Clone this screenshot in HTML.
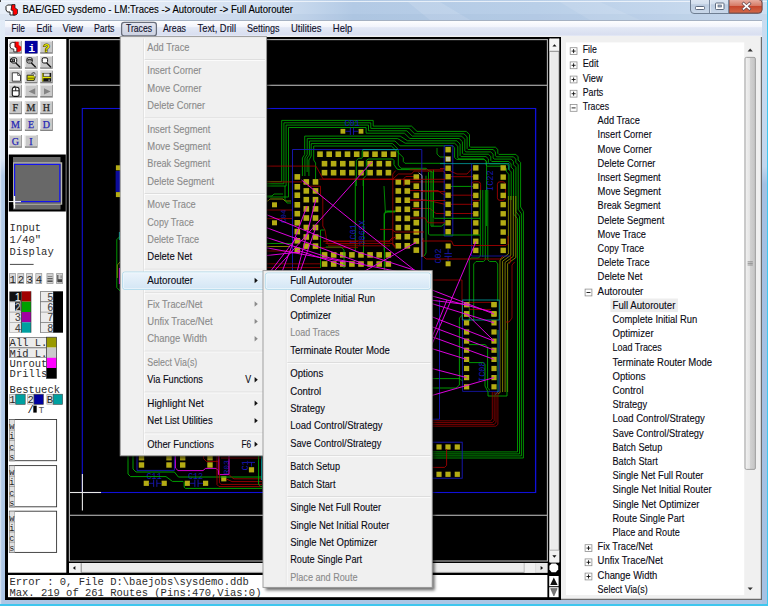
<!DOCTYPE html>
<html><head><meta charset="utf-8"><title>BAE/GED sysdemo</title>
<style>html,body{margin:0;padding:0;background:#c8daee;overflow:hidden}svg{display:block}text{white-space:pre}</style>
</head><body>
<svg width="768" height="606" viewBox="0 0 768 606" font-family="Liberation Sans, sans-serif">
<defs>
<linearGradient id="gTitle" x1="0" y1="0" x2="1" y2="0">
<stop offset="0" stop-color="#e6eef8"/><stop offset="0.12" stop-color="#eaf0f9"/><stop offset="0.36" stop-color="#cfdef0"/><stop offset="0.46" stop-color="#b3cae5"/><stop offset="0.7" stop-color="#b9cfe8"/><stop offset="0.86" stop-color="#c3d6ec"/><stop offset="1" stop-color="#cfdff1"/>
</linearGradient>
<linearGradient id="gMenu" x1="0" y1="0" x2="0" y2="1">
<stop offset="0" stop-color="#ffffff"/><stop offset="0.4" stop-color="#f2f4fb"/><stop offset="0.45" stop-color="#e3e8f5"/><stop offset="0.85" stop-color="#d9dff0"/><stop offset="1" stop-color="#eef1f9"/>
</linearGradient>
<linearGradient id="gFrameL" x1="0" y1="0" x2="0" y2="1">
<stop offset="0" stop-color="#e3ecf7"/><stop offset="0.262" stop-color="#dbe6f4"/><stop offset="0.29" stop-color="#b2cae7"/><stop offset="1" stop-color="#adc6e5"/>
</linearGradient>
<linearGradient id="gFrameR" x1="0" y1="0" x2="0" y2="1"><stop offset="0" stop-color="#c9dcf0"/><stop offset="0.25" stop-color="#c1d6ed"/><stop offset="0.28" stop-color="#a4c0e2"/><stop offset="1" stop-color="#a6c2e3"/></linearGradient>
<linearGradient id="gTrBtn" x1="0" y1="0" x2="0" y2="1"><stop offset="0" stop-color="#e3e6f0"/><stop offset="1" stop-color="#ccd1e1"/></linearGradient>
<linearGradient id="gClose" x1="0" y1="0" x2="0" y2="1">
<stop offset="0" stop-color="#e8b0a4"/><stop offset="0.45" stop-color="#d77c68"/><stop offset="0.5" stop-color="#c6452c"/><stop offset="1" stop-color="#d36a4a"/>
</linearGradient>
<linearGradient id="gBtn" x1="0" y1="0" x2="0" y2="1">
<stop offset="0" stop-color="#e4ecf6"/><stop offset="0.45" stop-color="#d3dfee"/><stop offset="0.5" stop-color="#bccce0"/><stop offset="1" stop-color="#c9d8ea"/>
</linearGradient>
<linearGradient id="gSel" x1="0" y1="0" x2="0" y2="1">
<stop offset="0" stop-color="#ecf4fb"/><stop offset="1" stop-color="#d3e6f5"/>
</linearGradient>
<linearGradient id="gThumbV" x1="0" y1="0" x2="1" y2="0">
<stop offset="0" stop-color="#f2f2f2"/><stop offset="0.45" stop-color="#e4e4e4"/><stop offset="0.5" stop-color="#d2d2d2"/><stop offset="1" stop-color="#c4c4c4"/>
</linearGradient>
<filter id="sh" x="-10%" y="-10%" width="130%" height="130%"><feGaussianBlur stdDeviation="1.6"/></filter>
<clipPath id="cv"><rect x="70" y="40" width="477" height="521"/></clipPath>
</defs>
<rect x="0" y="0" width="768" height="606" fill="url(#gFrameL)" />
<rect x="762" y="20" width="6" height="586" fill="url(#gFrameR)" />
<rect x="0" y="20" width="1.2" height="584" fill="#e3ecf6" opacity="0.7"/>
<rect x="0" y="0" width="768" height="20" fill="url(#gTitle)" />
<rect x="0" y="1" width="768" height="1" fill="#f4f8fc" opacity="0.8"/>
<polygon points="408,2 440,2 470,20 430,20" fill="#fff" opacity="0.13"/>
<polygon points="560,2 600,2 640,20 590,20" fill="#fff" opacity="0.10"/>
<rect x="0" y="14" width="768" height="6" fill="#7f9cc4" opacity="0.10"/>
<rect x="0" y="604" width="768" height="2" fill="#3fc6ee" />
<rect x="767" y="0" width="1" height="606" fill="#3fc6ee" />
<rect x="0" y="0" width="1" height="2" fill="#444" />
<g transform="translate(5,3)"><path d="M2.5 2 L7 2 L7 6 L10 6 L10 12 L5 12 L5 9 L2.5 9 L1 7 L1 3.5 Z" fill="#fff" stroke="#222" stroke-width="1"/><path d="M7 1.5 L10 1.5 L10 5 L12.5 6.5 L12.5 10.5 L11 12 L8 12 L8 7.5 L6 7 Z" fill="#f00" stroke="#222" stroke-width="0.8"/></g>
<text x="22.5" y="13.3" font-size="10.3" fill="#000" font-family="Liberation Sans" textLength="270.5" lengthAdjust="spacingAndGlyphs" stroke="#000" stroke-width="0.12" >BAE/GED sysdemo - LM:Traces -&gt; Autorouter -&gt; Full Autorouter</text>
<rect x="690.5" y="-4" width="71.5" height="17.5" rx="3.5" fill="url(#gBtn)" stroke="#6f7f93" stroke-width="1"/>
<path d="M729 0 H758.5 a3.5 3.5 0 0 1 3.5 3.5 V10 a3.5 3.5 0 0 1 -3.5 3.5 H729 Z" transform="translate(0,-0.5)" fill="url(#gClose)" stroke="#7c4a44" stroke-width="1"/>
<line x1="709.5" y1="0" x2="709.5" y2="13" stroke="#7a8aa0" stroke-width="1" />
<line x1="710.5" y1="0" x2="710.5" y2="13" stroke="#e8eff8" stroke-width="1" opacity="0.7"/>
<line x1="728.5" y1="0" x2="728.5" y2="13" stroke="#7a8aa0" stroke-width="1" />
<rect x="695.5" y="6.5" width="9" height="3" rx="0.8" fill="#fff" stroke="#5d6b80" stroke-width="1"/>
<rect x="715.5" y="3" width="8.5" height="6.5" rx="0.8" fill="#fff" stroke="#5d6b80" stroke-width="1"/>
<rect x="718" y="5" width="3.5" height="2" fill="#9aa8bc" stroke="#5d6b80" stroke-width="0.7"/>
<path d="M743.6 3.6 L749.4 8.8 M749.4 3.6 L743.6 8.8" stroke="#6a4a50" stroke-width="3" stroke-linecap="square"/>
<path d="M743.6 3.6 L749.4 8.8 M749.4 3.6 L743.6 8.8" stroke="#fff" stroke-width="1.6" stroke-linecap="square"/>
<rect x="5" y="20" width="757" height="17" fill="url(#gMenu)" />
<rect x="5" y="20" width="757" height="1" fill="#8f9db3" opacity="0.8"/>
<rect x="5" y="36" width="757" height="1" fill="#f0f0f0" />
<rect x="121.6" y="22.4" width="34.8" height="13.4" rx="2.6" fill="url(#gTrBtn)" stroke="#6a6f7c" stroke-width="1.25"/>
<text x="11.5" y="32.2" font-size="10.2" fill="#10102a" font-family="Liberation Sans" textLength="13.5" lengthAdjust="spacingAndGlyphs" stroke="#10102a" stroke-width="0.12" >File</text>
<text x="36.5" y="32.2" font-size="10.2" fill="#10102a" font-family="Liberation Sans" textLength="15.5" lengthAdjust="spacingAndGlyphs" stroke="#10102a" stroke-width="0.12" >Edit</text>
<text x="62.5" y="32.2" font-size="10.2" fill="#10102a" font-family="Liberation Sans" textLength="20.5" lengthAdjust="spacingAndGlyphs" stroke="#10102a" stroke-width="0.12" >View</text>
<text x="94" y="32.2" font-size="10.2" fill="#10102a" font-family="Liberation Sans" textLength="20.5" lengthAdjust="spacingAndGlyphs" stroke="#10102a" stroke-width="0.12" >Parts</text>
<text x="126" y="32.2" font-size="10.2" fill="#10102a" font-family="Liberation Sans" textLength="26" lengthAdjust="spacingAndGlyphs" stroke="#10102a" stroke-width="0.12" >Traces</text>
<text x="163" y="32.2" font-size="10.2" fill="#10102a" font-family="Liberation Sans" textLength="23" lengthAdjust="spacingAndGlyphs" stroke="#10102a" stroke-width="0.12" >Areas</text>
<text x="197.5" y="32.2" font-size="10.2" fill="#10102a" font-family="Liberation Sans" textLength="38.5" lengthAdjust="spacingAndGlyphs" stroke="#10102a" stroke-width="0.12" >Text, Drill</text>
<text x="247" y="32.2" font-size="10.2" fill="#10102a" font-family="Liberation Sans" textLength="32.5" lengthAdjust="spacingAndGlyphs" stroke="#10102a" stroke-width="0.12" >Settings</text>
<text x="291" y="32.2" font-size="10.2" fill="#10102a" font-family="Liberation Sans" textLength="30.5" lengthAdjust="spacingAndGlyphs" stroke="#10102a" stroke-width="0.12" >Utilities</text>
<text x="332.8" y="32.2" font-size="10.2" fill="#10102a" font-family="Liberation Sans" textLength="19.5" lengthAdjust="spacingAndGlyphs" stroke="#10102a" stroke-width="0.12" >Help</text>
<rect x="5" y="37" width="757" height="563" fill="#000" />
<rect x="8" y="39" width="58.3" height="533.7" fill="#fff" />
<rect x="9.3" y="40.9" width="12.6" height="12.8" fill="#848484" />
<rect x="9.3" y="40.9" width="11.799999999999999" height="11.200000000000001" fill="#f4f4f4" />
<rect x="10.0" y="41.6" width="11.1" height="10.5" fill="#c9c9c9" />
<rect x="24.9" y="40.9" width="12.6" height="12.8" fill="#848484" />
<rect x="24.9" y="40.9" width="11.799999999999999" height="11.200000000000001" fill="#f4f4f4" />
<rect x="25.599999999999998" y="41.6" width="11.1" height="10.5" fill="#c9c9c9" />
<rect x="40.2" y="40.9" width="12.6" height="12.8" fill="#848484" />
<rect x="40.2" y="40.9" width="11.799999999999999" height="11.200000000000001" fill="#f4f4f4" />
<rect x="40.900000000000006" y="41.6" width="11.1" height="10.5" fill="#c9c9c9" />
<rect x="9.3" y="56.0" width="12.6" height="12.8" fill="#848484" />
<rect x="9.3" y="56.0" width="11.799999999999999" height="11.200000000000001" fill="#f4f4f4" />
<rect x="10.0" y="56.7" width="11.1" height="10.5" fill="#c9c9c9" />
<rect x="24.9" y="56.0" width="12.6" height="12.8" fill="#848484" />
<rect x="24.9" y="56.0" width="11.799999999999999" height="11.200000000000001" fill="#f4f4f4" />
<rect x="25.599999999999998" y="56.7" width="11.1" height="10.5" fill="#c9c9c9" />
<rect x="40.2" y="56.0" width="12.6" height="12.8" fill="#848484" />
<rect x="40.2" y="56.0" width="11.799999999999999" height="11.200000000000001" fill="#f4f4f4" />
<rect x="40.900000000000006" y="56.7" width="11.1" height="10.5" fill="#c9c9c9" />
<rect x="9.3" y="70.6" width="12.6" height="12.8" fill="#848484" />
<rect x="9.3" y="70.6" width="11.799999999999999" height="11.200000000000001" fill="#f4f4f4" />
<rect x="10.0" y="71.3" width="11.1" height="10.5" fill="#c9c9c9" />
<rect x="24.9" y="70.6" width="12.6" height="12.8" fill="#848484" />
<rect x="24.9" y="70.6" width="11.799999999999999" height="11.200000000000001" fill="#f4f4f4" />
<rect x="25.599999999999998" y="71.3" width="11.1" height="10.5" fill="#c9c9c9" />
<rect x="40.2" y="70.6" width="12.6" height="12.8" fill="#848484" />
<rect x="40.2" y="70.6" width="11.799999999999999" height="11.200000000000001" fill="#f4f4f4" />
<rect x="40.900000000000006" y="71.3" width="11.1" height="10.5" fill="#c9c9c9" />
<rect x="9.3" y="84.8" width="12.6" height="12.8" fill="#848484" />
<rect x="9.3" y="84.8" width="11.799999999999999" height="11.200000000000001" fill="#f4f4f4" />
<rect x="10.0" y="85.5" width="11.1" height="10.5" fill="#c9c9c9" />
<rect x="24.9" y="84.8" width="12.6" height="12.8" fill="#848484" />
<rect x="24.9" y="84.8" width="11.799999999999999" height="11.200000000000001" fill="#f4f4f4" />
<rect x="25.599999999999998" y="85.5" width="11.1" height="10.5" fill="#c9c9c9" />
<rect x="40.2" y="84.8" width="12.6" height="12.8" fill="#848484" />
<rect x="40.2" y="84.8" width="11.799999999999999" height="11.200000000000001" fill="#f4f4f4" />
<rect x="40.900000000000006" y="85.5" width="11.1" height="10.5" fill="#c9c9c9" />
<rect x="9.3" y="101.4" width="12.6" height="12.8" fill="#848484" />
<rect x="9.3" y="101.4" width="11.799999999999999" height="11.200000000000001" fill="#f4f4f4" />
<rect x="10.0" y="102.10000000000001" width="11.1" height="10.5" fill="#c9c9c9" />
<rect x="24.9" y="101.4" width="12.6" height="12.8" fill="#848484" />
<rect x="24.9" y="101.4" width="11.799999999999999" height="11.200000000000001" fill="#f4f4f4" />
<rect x="25.599999999999998" y="102.10000000000001" width="11.1" height="10.5" fill="#c9c9c9" />
<rect x="40.2" y="101.4" width="12.6" height="12.8" fill="#848484" />
<rect x="40.2" y="101.4" width="11.799999999999999" height="11.200000000000001" fill="#f4f4f4" />
<rect x="40.900000000000006" y="102.10000000000001" width="11.1" height="10.5" fill="#c9c9c9" />
<rect x="9.3" y="118.2" width="12.6" height="12.8" fill="#848484" />
<rect x="9.3" y="118.2" width="11.799999999999999" height="11.200000000000001" fill="#f4f4f4" />
<rect x="10.0" y="118.9" width="11.1" height="10.5" fill="#c9c9c9" />
<rect x="24.9" y="118.2" width="12.6" height="12.8" fill="#848484" />
<rect x="24.9" y="118.2" width="11.799999999999999" height="11.200000000000001" fill="#f4f4f4" />
<rect x="25.599999999999998" y="118.9" width="11.1" height="10.5" fill="#c9c9c9" />
<rect x="40.2" y="118.2" width="12.6" height="12.8" fill="#848484" />
<rect x="40.2" y="118.2" width="11.799999999999999" height="11.200000000000001" fill="#f4f4f4" />
<rect x="40.900000000000006" y="118.9" width="11.1" height="10.5" fill="#c9c9c9" />
<rect x="9.3" y="135" width="12.6" height="12.8" fill="#848484" />
<rect x="9.3" y="135" width="11.799999999999999" height="11.200000000000001" fill="#f4f4f4" />
<rect x="10.0" y="135.7" width="11.1" height="10.5" fill="#c9c9c9" />
<rect x="24.9" y="135" width="12.6" height="12.8" fill="#848484" />
<rect x="24.9" y="135" width="11.799999999999999" height="11.200000000000001" fill="#f4f4f4" />
<rect x="25.599999999999998" y="135.7" width="11.1" height="10.5" fill="#c9c9c9" />
<g transform="translate(9.3,40.9)"><path d="M3 1.5 L6.5 1.5 L6.5 5 L8.5 5.5 L8.5 11 L4.5 11 L4.5 8.2 L2 7.8 L0.8 6 L0.8 3 Z" fill="#fff" stroke="#222" stroke-width="0.9"/><path d="M5.4 0.9 L9.4 0.9 L9.4 4.2 L11.9 5.8 L11.9 9.4 L10.2 10.9 L7.4 10.9 L7.4 6.8 L5.4 6 Z" fill="#f00"/><path d="M5.8 1 L5.8 6.2 L7.5 6.8 L7.5 11" fill="none" stroke="#222" stroke-width="0.8"/></g>
<rect x="24.9" y="40.9" width="12.6" height="12.4" fill="#0000a0" />
<text x="28.2" y="51.6" font-size="11.5" fill="#fff" font-family="Liberation Mono" font-weight="bold" >i</text>
<text x="46.5" y="51.6" font-size="11" font-weight="bold" font-family="Liberation Sans" text-anchor="middle" fill="#e6e600" stroke="#3a3a00" stroke-width="1.1" paint-order="stroke">?</text>
<g transform="translate(9.3,56.0)">
<path d="M6.5 7 L10.8 11.2" stroke="#111" stroke-width="1.3"/>
<rect x="2" y="1.8" width="5.4" height="5.2" rx="1.6" fill="#fff" stroke="#111" stroke-width="1"/>
<rect x="1.2" y="3.2" width="4" height="2.4" fill="#fff" stroke="#111" stroke-width="0.9"/><path d="M2.2 4.4 H4.4 M3.3 3.5 V5.3" stroke="#111" stroke-width="0.7"/>
</g>
<g transform="translate(24.9,56.0)">
<path d="M6.5 7 L10.8 11.2" stroke="#111" stroke-width="1.3"/>
<rect x="2" y="1.8" width="5.4" height="5.2" rx="1.6" fill="#fff" stroke="#111" stroke-width="1"/>
<rect x="3" y="3.4" width="3.4" height="1.6" fill="#ddd" stroke="#111" stroke-width="0.8"/>
</g>
<g transform="translate(40.2,56.0)">
<path d="M6.5 7 L10.8 11.2" stroke="#111" stroke-width="1.3"/>
<rect x="2" y="1.8" width="5.4" height="5.2" rx="1.6" fill="#fff" stroke="#111" stroke-width="1"/>

</g>
<g transform="translate(9.3,70.6)"><path d="M3 2.2 H8.6 L11.2 4.6 V10.6 H3 Z" fill="#fff" stroke="#333" stroke-width="0.9"/><path d="M8.4 2.2 V4.8 H11.2" fill="none" stroke="#333" stroke-width="0.8"/></g>
<g transform="translate(24.9,70.6)"><path d="M2.2 4.6 H9.6 L10.6 5.6 L9.2 9.8 H2.2 Z" fill="#dcdc00" stroke="#222" stroke-width="0.9"/><path d="M2.6 7.6 H9.2" stroke="#6a6a00" stroke-width="1.1"/><path d="M6.5 3.2 Q8.5 1.2 10.2 2.6" fill="none" stroke="#222" stroke-width="0.8"/><rect x="9" y="3.4" width="2" height="2.6" fill="#fff" stroke="#555" stroke-width="0.5"/></g>
<g transform="translate(40.2,70.6)"><rect x="2" y="2.4" width="9" height="8.6" fill="#111"/><rect x="3.6" y="2.8" width="5.8" height="3" fill="#d8d8d8"/><rect x="2.4" y="6.3" width="8.2" height="1.3" fill="#e6e600"/><rect x="2.2" y="2.6" width="0.9" height="8.2" fill="#e6e600"/><rect x="8.2" y="9" width="1.4" height="1" fill="#ddd"/></g>
<g transform="translate(9.3,84.8)"><path d="M3 5 Q3 2.5 5 2.5 H7.5 Q9.8 2.5 9.8 5 V10 Q9.8 11.6 8 11.6 H4.8 Q3 11.6 3 10 Z" fill="#fff" stroke="#111" stroke-width="1.1"/><path d="M3 6 H9.8 M6.4 2.8 V6" stroke="#111" stroke-width="0.9"/><path d="M4.2 2.6 Q4.6 0.8 6.2 1.6" fill="none" stroke="#111" stroke-width="0.9"/></g>
<path d="M35.2 88.2 V94.6 L28.6 91.4 Z" fill="#848484"/>
<path d="M44 88.2 V94.6 L50.6 91.4 Z" fill="#848484"/>
<text x="15.4" y="111.30000000000001" font-size="10" fill="#222" font-family="Liberation Serif" text-anchor="middle" stroke="#222" stroke-width="0.25">F</text>
<text x="31.0" y="111.30000000000001" font-size="10" fill="#222" font-family="Liberation Serif" text-anchor="middle" stroke="#222" stroke-width="0.25">M</text>
<text x="46.300000000000004" y="111.30000000000001" font-size="10" fill="#222" font-family="Liberation Serif" text-anchor="middle" stroke="#222" stroke-width="0.25">H</text>
<text x="15.4" y="128.1" font-size="10" fill="#2626b4" font-family="Liberation Serif" text-anchor="middle" stroke="#2626b4" stroke-width="0.25">M</text>
<text x="31.0" y="128.1" font-size="10" fill="#2626b4" font-family="Liberation Serif" text-anchor="middle" stroke="#2626b4" stroke-width="0.25">E</text>
<text x="46.300000000000004" y="128.1" font-size="10" fill="#2626b4" font-family="Liberation Serif" text-anchor="middle" stroke="#2626b4" stroke-width="0.25">D</text>
<text x="15.4" y="144.9" font-size="10" fill="#2626b4" font-family="Liberation Serif" text-anchor="middle" stroke="#2626b4" stroke-width="0.25">G</text>
<text x="31.0" y="144.9" font-size="10" fill="#2626b4" font-family="Liberation Serif" text-anchor="middle" stroke="#2626b4" stroke-width="0.25">I</text>
<rect x="8.8" y="154.5" width="57" height="57" fill="#000" />
<rect x="13" y="157" width="47.5" height="52.5" fill="#6a6a6a" />
<rect x="13" y="162.3" width="49.2" height="42.4" fill="#b9b9b0" />
<rect x="13.8" y="163.6" width="47.2" height="40.2" fill="#686868" />
<rect x="14.6" y="164.4" width="45.2" height="37.2" fill="none" stroke="#1414f0" stroke-width="1.2"/>
<line x1="8.8" y1="201.6" x2="21" y2="201.6" stroke="#fff" stroke-width="1" />
<line x1="14.5" y1="196" x2="14.5" y2="208.5" stroke="#fff" stroke-width="1.3" />
<text x="9.6" y="230.6" font-size="10.5" fill="#2c2c2c" font-family="Liberation Mono" >Input</text>
<text x="9.6" y="242.8" font-size="10.5" fill="#2c2c2c" font-family="Liberation Mono" >1/40"</text>
<text x="9.6" y="255" font-size="10.5" fill="#2c2c2c" font-family="Liberation Mono" >Display</text>
<line x1="9.9" y1="264.4" x2="33.6" y2="264.4" stroke="#333" stroke-width="0.9" />
<rect x="9.2" y="273.2" width="6.6" height="10.6" fill="#8c8c8c" />
<rect x="9.799999999999999" y="273.8" width="5.4" height="9.4" fill="#d8d8d8" />
<text x="9.399999999999999" y="282.6" font-size="10.5" fill="#222" font-family="Liberation Mono" >1</text>
<rect x="17.5" y="273.2" width="6.6" height="10.6" fill="#8c8c8c" />
<rect x="18.1" y="273.8" width="5.4" height="9.4" fill="#d8d8d8" />
<text x="17.7" y="282.6" font-size="10.5" fill="#222" font-family="Liberation Mono" >2</text>
<rect x="26.2" y="273.2" width="6.6" height="10.6" fill="#8c8c8c" />
<rect x="26.8" y="273.8" width="5.4" height="9.4" fill="#d8d8d8" />
<text x="26.4" y="282.6" font-size="10.5" fill="#222" font-family="Liberation Mono" >3</text>
<rect x="35.5" y="273.2" width="6.6" height="10.6" fill="#8c8c8c" />
<rect x="36.1" y="273.8" width="5.4" height="9.4" fill="#d8d8d8" />
<text x="35.7" y="282.6" font-size="10.5" fill="#222" font-family="Liberation Mono" >4</text>
<rect x="46.6" y="273.2" width="6.8" height="10.6" fill="#8c8c8c" />
<rect x="47.2" y="273.8" width="5.6" height="9.4" fill="#d0d0d0" />
<rect x="56.2" y="273.2" width="6.8" height="10.6" fill="#8c8c8c" />
<rect x="56.800000000000004" y="273.8" width="5.6" height="9.4" fill="#d0d0d0" />
<rect x="47.4" y="278.2" width="5.2" height="1" fill="#444" />
<rect x="47.4" y="280.4" width="5.2" height="1.6" fill="#555" />
<rect x="47.6" y="276" width="4.8" height="1" fill="#888" />
<rect x="57.2" y="275" width="1.2" height="7" fill="#555" />
<rect x="58" y="279.2" width="4" height="3" fill="#444" />
<rect x="60.6" y="275.4" width="1" height="3" fill="#777" />
<rect x="9.2" y="291.3" width="12.2" height="10.4" fill="#9a9a9a" />
<rect x="9.6" y="291.8" width="11.6" height="9.5" fill="#111" />
<rect x="21.4" y="291.3" width="9.6" height="10.4" fill="#a00000" />
<text x="14.9" y="300.5" font-size="10.2" fill="#eee" font-family="Liberation Sans" stroke="#eee" stroke-width="0.12" >1</text>
<rect x="9.2" y="301.7" width="12.2" height="10.4" fill="#9a9a9a" />
<rect x="9.6" y="302.2" width="11.6" height="9.5" fill="#ececec" />
<rect x="21.4" y="301.7" width="9.6" height="10.4" fill="#00a000" />
<text x="14.9" y="310.9" font-size="10.2" fill="#444" font-family="Liberation Sans" stroke="#444" stroke-width="0.12" >2</text>
<rect x="9.2" y="312" width="12.2" height="10.4" fill="#9a9a9a" />
<rect x="9.6" y="312.5" width="11.6" height="9.5" fill="#ececec" />
<rect x="21.4" y="312" width="9.6" height="10.4" fill="#a000a0" />
<text x="14.9" y="321.2" font-size="10.2" fill="#444" font-family="Liberation Sans" stroke="#444" stroke-width="0.12" >3</text>
<rect x="9.2" y="322.3" width="12.2" height="10.4" fill="#9a9a9a" />
<rect x="9.6" y="322.8" width="11.6" height="9.5" fill="#ececec" />
<rect x="21.4" y="322.3" width="9.6" height="10.4" fill="#00a0a0" />
<text x="14.9" y="331.5" font-size="10.2" fill="#444" font-family="Liberation Sans" stroke="#444" stroke-width="0.12" >4</text>
<rect x="15" y="302.2" width="5.5" height="8.6" fill="#222" />
<text x="14.9" y="310.9" font-size="10.2" fill="#ccc" font-family="Liberation Sans" stroke="#ccc" stroke-width="0.12" >2</text>
<line x1="21.4" y1="291.3" x2="21.4" y2="332.7" stroke="#333" stroke-width="0.8" />
<line x1="31" y1="291.3" x2="31" y2="332.7" stroke="#333" stroke-width="0.6" />
<rect x="40.3" y="291.3" width="22.7" height="41.4" fill="#000" />
<rect x="40.3" y="291.3" width="12.8" height="10.4" fill="#9a9a9a" />
<rect x="40.9" y="291.8" width="12.2" height="9.5" fill="#ececec" />
<text x="47.4" y="300.5" font-size="10.2" fill="#444" font-family="Liberation Sans" stroke="#444" stroke-width="0.12" >5</text>
<rect x="40.3" y="301.7" width="12.8" height="10.4" fill="#9a9a9a" />
<rect x="40.9" y="302.2" width="12.2" height="9.5" fill="#ececec" />
<text x="47.4" y="310.9" font-size="10.2" fill="#444" font-family="Liberation Sans" stroke="#444" stroke-width="0.12" >6</text>
<rect x="40.3" y="312" width="12.8" height="10.4" fill="#9a9a9a" />
<rect x="40.9" y="312.5" width="12.2" height="9.5" fill="#ececec" />
<text x="47.4" y="321.2" font-size="10.2" fill="#444" font-family="Liberation Sans" stroke="#444" stroke-width="0.12" >7</text>
<rect x="40.3" y="322.3" width="12.8" height="10.4" fill="#9a9a9a" />
<rect x="40.9" y="322.8" width="12.2" height="9.5" fill="#ececec" />
<text x="47.4" y="331.5" font-size="10.2" fill="#444" font-family="Liberation Sans" stroke="#444" stroke-width="0.12" >8</text>
<rect x="9.2" y="337.2" width="37.4" height="10.2" fill="#555" />
<rect x="9.7" y="337.8" width="36.9" height="9.2" fill="#ececec" />
<rect x="9.2" y="347.6" width="37.4" height="10.2" fill="#555" />
<rect x="9.7" y="348.2" width="36.9" height="9.2" fill="#ececec" />
<text x="9.6" y="346.4" font-size="10.5" fill="#2c2c2c" font-family="Liberation Mono" >All L.</text>
<text x="9.6" y="356.7" font-size="10.5" fill="#2c2c2c" font-family="Liberation Mono" >Mid L.</text>
<text x="9.6" y="366.9" font-size="10.5" fill="#2c2c2c" font-family="Liberation Mono" >Unrout</text>
<text x="9.6" y="377" font-size="10.5" fill="#2c2c2c" font-family="Liberation Mono" >Drills</text>
<rect x="46.6" y="337.2" width="10" height="10.4" fill="#9a9a00" />
<rect x="46.6" y="347.6" width="10" height="10.4" fill="#cacaca" />
<rect x="46.6" y="357.8" width="10" height="10.4" fill="#ff00ff" />
<rect x="46.6" y="368" width="10" height="10.4" fill="#000" />
<rect x="46.6" y="337.2" width="10" height="41.2" fill="none" stroke="#333" stroke-width="0.7"/>
<text x="9.6" y="393.2" font-size="10.5" fill="#2c2c2c" font-family="Liberation Mono" >Bestueck</text>
<rect x="9.2" y="394.2" width="6.6" height="10.2" fill="#888" />
<rect x="9.7" y="394.7" width="5.8" height="9.2" fill="#e4e4e4" />
<text x="9.299999999999999" y="403.2" font-size="10.5" fill="#222" font-family="Liberation Mono" >1</text>
<rect x="15.799999999999999" y="394.2" width="9.4" height="10.2" fill="#00a0a0" />
<rect x="15.799999999999999" y="394.2" width="9.4" height="10.2" fill="none" stroke="#444" stroke-width="0.6"/>
<rect x="27.4" y="394.2" width="6.6" height="10.2" fill="#888" />
<rect x="27.9" y="394.7" width="5.8" height="9.2" fill="#e4e4e4" />
<text x="27.5" y="403.2" font-size="10.5" fill="#222" font-family="Liberation Mono" >2</text>
<rect x="34.0" y="394.2" width="9.4" height="10.2" fill="#0000a0" />
<rect x="34.0" y="394.2" width="9.4" height="10.2" fill="none" stroke="#444" stroke-width="0.6"/>
<rect x="46.6" y="394.2" width="6.6" height="10.2" fill="#888" />
<rect x="47.1" y="394.7" width="5.8" height="9.2" fill="#e4e4e4" />
<text x="46.7" y="403.2" font-size="10.5" fill="#222" font-family="Liberation Mono" >B</text>
<rect x="53.2" y="394.2" width="9.4" height="10.2" fill="#00a0a0" />
<rect x="53.2" y="394.2" width="9.4" height="10.2" fill="none" stroke="#444" stroke-width="0.6"/>
<text x="27.6" y="412.6" font-size="10.5" fill="#111" font-family="Liberation Mono" >/</text>
<rect x="33.3" y="405.6" width="3.4" height="7" fill="#000" />
<text x="38.4" y="412.8" font-size="9.5" fill="#555" font-family="Liberation Mono" >T</text>
<rect x="9.4" y="419.5" width="47.2" height="41.2" fill="#fff" stroke="#333" stroke-width="0.9"/>
<rect x="9.2" y="419.5" width="5.6" height="41.6" fill="#9a9a9a" />
<rect x="9.7" y="420.0" width="4.6" height="40.6" fill="#e0e0e0" />
<text x="9.3" y="429.1" font-size="8.5" fill="#222" font-family="Liberation Mono" transform="rotate(0)">w</text>
<line x1="9.2" y1="430.1" x2="14.8" y2="430.1" stroke="#777" stroke-width="0.6" />
<text x="9.3" y="439.3" font-size="8.5" fill="#222" font-family="Liberation Mono" transform="rotate(0)">i</text>
<line x1="9.2" y1="440.3" x2="14.8" y2="440.3" stroke="#777" stroke-width="0.6" />
<text x="9.3" y="449.5" font-size="8.5" fill="#222" font-family="Liberation Mono" transform="rotate(0)">c</text>
<line x1="9.2" y1="450.5" x2="14.8" y2="450.5" stroke="#777" stroke-width="0.6" />
<text x="9.3" y="459.70000000000005" font-size="8.5" fill="#222" font-family="Liberation Mono" transform="rotate(0)">s</text>
<line x1="9.2" y1="460.70000000000005" x2="14.8" y2="460.70000000000005" stroke="#777" stroke-width="0.6" />
<rect x="9.4" y="465.6" width="47.2" height="41.2" fill="#fff" stroke="#333" stroke-width="0.9"/>
<rect x="9.2" y="465.6" width="5.6" height="41.6" fill="#9a9a9a" />
<rect x="9.7" y="466.1" width="4.6" height="40.6" fill="#e0e0e0" />
<text x="9.3" y="475.20000000000005" font-size="8.5" fill="#222" font-family="Liberation Mono" transform="rotate(0)">w</text>
<line x1="9.2" y1="476.20000000000005" x2="14.8" y2="476.20000000000005" stroke="#777" stroke-width="0.6" />
<text x="9.3" y="485.40000000000003" font-size="8.5" fill="#222" font-family="Liberation Mono" transform="rotate(0)">i</text>
<line x1="9.2" y1="486.40000000000003" x2="14.8" y2="486.40000000000003" stroke="#777" stroke-width="0.6" />
<text x="9.3" y="495.6" font-size="8.5" fill="#222" font-family="Liberation Mono" transform="rotate(0)">c</text>
<line x1="9.2" y1="496.6" x2="14.8" y2="496.6" stroke="#777" stroke-width="0.6" />
<text x="9.3" y="505.80000000000007" font-size="8.5" fill="#222" font-family="Liberation Mono" transform="rotate(0)">s</text>
<line x1="9.2" y1="506.80000000000007" x2="14.8" y2="506.80000000000007" stroke="#777" stroke-width="0.6" />
<rect x="9.4" y="511.2" width="47.2" height="41.2" fill="#fff" stroke="#333" stroke-width="0.9"/>
<rect x="9.2" y="511.2" width="5.6" height="41.6" fill="#9a9a9a" />
<rect x="9.7" y="511.7" width="4.6" height="40.6" fill="#e0e0e0" />
<text x="9.3" y="520.8" font-size="8.5" fill="#222" font-family="Liberation Mono" transform="rotate(0)">w</text>
<line x1="9.2" y1="521.8" x2="14.8" y2="521.8" stroke="#777" stroke-width="0.6" />
<text x="9.3" y="531.0" font-size="8.5" fill="#222" font-family="Liberation Mono" transform="rotate(0)">i</text>
<line x1="9.2" y1="532.0" x2="14.8" y2="532.0" stroke="#777" stroke-width="0.6" />
<text x="9.3" y="541.1999999999999" font-size="8.5" fill="#222" font-family="Liberation Mono" transform="rotate(0)">c</text>
<line x1="9.2" y1="542.1999999999999" x2="14.8" y2="542.1999999999999" stroke="#777" stroke-width="0.6" />
<text x="9.3" y="551.4" font-size="8.5" fill="#222" font-family="Liberation Mono" transform="rotate(0)">s</text>
<line x1="9.2" y1="552.4" x2="14.8" y2="552.4" stroke="#777" stroke-width="0.6" />
<rect x="69.4" y="39.6" width="478" height="521.4" fill="#000" stroke="#b4b4b4" stroke-width="1.1"/>
<g clip-path="url(#cv)">
<line x1="70" y1="85.2" x2="547" y2="85.2" stroke="#c8c8c8" stroke-width="1.1" />
<line x1="70" y1="515.2" x2="547" y2="515.2" stroke="#c8c8c8" stroke-width="1.1" />
<rect x="82.3" y="108.5" width="453.4" height="384" fill="none" stroke="#1010d8" stroke-width="1.1"/>
<polyline points="262.0,181.6 281.7,181.6 281.7,120.4 373.2,120.4 373.2,126.1 411.5,126.1 417.0,131.4 466.3,131.4 469.5,134.6 469.5,146.2 470.5,147.2 495.4,147.2 497.8,149.5 497.8,153.3 498.9,154.4 515.9,154.4 518.1,156.8 518.1,160.0 520.6,162.5 520.6,207.0 523.4,211.5 523.4,458.0 430.0,458.0" fill="none" stroke="#00a800" stroke-width="0.85" />
<polyline points="262.0,183.8 283.9,183.8 283.9,122.8 370.8,122.8 370.8,128.4 409.1,128.4 414.6,133.8 463.9,133.8 467.1,136.9 467.1,148.5 468.1,149.5 493.0,149.5 495.4,151.8 495.4,155.7 496.5,156.8 513.5,156.8 515.8,159.2 515.8,162.3 518.2,164.8 518.2,209.3 521.4,213.8 521.4,455.9 430.0,455.9" fill="none" stroke="#00a800" stroke-width="0.85" />
<polyline points="262.0,186.0 286.1,186.0 286.1,125.1 368.5,125.1 368.5,130.8 406.8,130.8 412.3,136.1 461.6,136.1 464.8,139.3 464.8,150.9 465.8,151.9 490.7,151.9 493.1,154.2 493.1,158.0 494.2,159.1 511.2,159.1 513.4,161.5 513.4,164.7 515.9,167.2 515.9,211.7 519.5,216.2 519.5,453.9 430.0,453.9" fill="none" stroke="#00a800" stroke-width="0.85" />
<polyline points="262.0,197.0 288.5,197.0 288.5,127.5 366.1,127.5 366.1,133.2 404.4,133.2 409.9,138.5 459.2,138.5 462.4,141.7 462.4,153.2 463.4,154.2 488.3,154.2 490.8,156.6 490.8,160.4 491.8,161.5 508.8,161.5 511.1,163.9 511.1,167.1 513.6,169.6 513.6,214.1 517.5,218.6 517.5,451.9 430.0,451.9" fill="none" stroke="#00a800" stroke-width="0.85" />
<polyline points="302.4,176.0 302.4,158.0 304.7,154.5 304.7,136.1 400.2,136.1 407.6,140.8 456.9,140.8 460.1,144.0 460.1,155.6 461.1,156.6 486.0,156.6 488.4,158.9 488.4,162.7 489.5,163.8 506.5,163.8 508.7,166.2 508.7,169.4 511.2,171.9 511.2,200.0" fill="none" stroke="#00a800" stroke-width="0.85" />
<polyline points="304.9,176.0 304.9,158.0 307.2,154.5 307.2,138.6 397.7,138.6 405.2,143.2 454.6,143.2 457.8,146.3 457.8,157.9 458.8,158.9 483.6,158.9 486.1,161.2 486.1,165.1 487.1,166.2 504.1,166.2 506.4,168.6 506.4,171.8 508.9,174.2 508.9,200.0" fill="none" stroke="#00a800" stroke-width="0.85" />
<polyline points="307.1,172.0 307.1,158.0 309.4,155.0 309.4,141.0 395.0,141.0 400.0,145.8 452.6,145.8 454.6,147.8 454.6,157.4 456.6,159.4 484.6,159.4 486.6,161.4 486.6,226.0" fill="none" stroke="#00a800" stroke-width="0.85" />
<polyline points="308.9,176.0 308.9,160.0 311.2,156.0 311.2,143.6 392.6,143.6 398.3,149.5 398.3,165.0 401.0,168.3 426.0,168.3 429.0,171.0 431.0,171.0 433.0,173.5 433.0,226.0" fill="none" stroke="#00a800" stroke-width="0.85" />
<polyline points="313.7,160.0 313.7,146.0 391.4,146.0 403.3,157.5 403.3,161.5 405.0,163.3 445.4,163.3" fill="none" stroke="#00a800" stroke-width="0.85" />
<polyline points="313.7,160.0 315.6,163.0 315.6,179.0" fill="none" stroke="#00a800" stroke-width="0.85" />
<polyline points="356.3,186.0 356.3,160.5 358.6,158.3 361.8,158.3 362.2,157.8 362.2,151.0 363.4,149.8" fill="none" stroke="#00a800" stroke-width="0.85" />
<polyline points="363.2,186.0 363.2,178.5 366.3,175.3 366.3,160.5 368.0,159.0 392.6,159.0 394.0,160.5 394.0,164.5 397.0,169.0 399.0,169.6 426.0,169.6" fill="none" stroke="#00a800" stroke-width="0.9" />
<polyline points="445.4,157.0 440.0,157.0 437.0,154.0 437.0,148.0" fill="none" stroke="#00a800" stroke-width="0.8" />
<line x1="355.3" y1="178" x2="355.3" y2="252" stroke="#00a800" stroke-width="0.9" />
<line x1="363.5" y1="178" x2="363.5" y2="252" stroke="#00a800" stroke-width="0.9" />
<polyline points="384.2,250.5 384.2,213.2 386.5,211.0 396.0,211.0" fill="none" stroke="#00a800" stroke-width="0.9" />
<polyline points="262.0,166.1 316.0,166.1 323.1,179.0 392.6,179.4 398.3,174.0 411.5,174.0 414.0,171.1 442.8,171.1 446.0,173.5" fill="none" stroke="#a00000" stroke-width="0.85" />
<polyline points="262.0,181.9 302.0,181.9" fill="none" stroke="#a00000" stroke-width="0.85" />
<polyline points="404.0,186.0 404.0,178.4 405.8,176.5 414.0,176.5" fill="none" stroke="#a00000" stroke-width="0.85" />
<polyline points="410.0,181.9 445.0,181.9" fill="none" stroke="#a00000" stroke-width="0.85" />
<polyline points="440.0,168.5 444.0,168.5 457.0,174.0 467.0,174.0 472.0,168.5" fill="none" stroke="#a00000" stroke-width="0.85" />
<line x1="451" y1="176.7" x2="473" y2="176.7" stroke="#a00000" stroke-width="0.9" />
<line x1="451" y1="195.2" x2="473" y2="195.2" stroke="#a00000" stroke-width="0.9" />
<line x1="451" y1="204.3" x2="473" y2="204.3" stroke="#a00000" stroke-width="0.9" />
<line x1="451" y1="213.5" x2="473" y2="213.5" stroke="#a00000" stroke-width="0.9" />
<line x1="451" y1="186.4" x2="473" y2="186.4" stroke="#00a800" stroke-width="0.9" />
<polyline points="410.0,190.5 438.0,190.5 441.0,193.0 445.0,195.0" fill="none" stroke="#a00000" stroke-width="0.85" />
<polyline points="410.0,199.8 425.0,199.8 445.0,204.3" fill="none" stroke="#a00000" stroke-width="0.85" />
<polyline points="412.0,208.5 430.0,208.5 436.0,213.5 445.0,213.5" fill="none" stroke="#a00000" stroke-width="0.85" />
<rect x="471.6" y="181.8" width="9" height="19" rx="2.5" fill="none" stroke="#a00000" stroke-width="0.9"/>
<rect x="497.4" y="181.8" width="8" height="18.5" rx="2.5" fill="none" stroke="#a00000" stroke-width="0.9"/>
<polyline points="508.4,196.0 508.4,254.0 500.0,260.0 500.0,392.0" fill="none" stroke="#8c8c00" stroke-width="0.85" />
<polyline points="510.8,196.0 510.8,255.2 502.6,261.2 502.6,392.0" fill="none" stroke="#8c8c00" stroke-width="0.85" />
<polyline points="513.3,196.0 513.3,256.4 505.1,262.4 505.1,392.0" fill="none" stroke="#8c8c00" stroke-width="0.85" />
<polyline points="515.8,196.0 515.8,257.6 507.6,263.6 507.6,392.0" fill="none" stroke="#8c8c00" stroke-width="0.85" />
<polyline points="480.3,190.0 480.3,256.0 478.5,258.0 471.0,258.0 469.3,260.0 469.3,321.0" fill="none" stroke="#00a800" stroke-width="0.85" />
<polyline points="485.3,190.0 485.3,259.8 483.5,261.5 476.0,261.5 473.7,264.0 473.7,321.0" fill="none" stroke="#00a800" stroke-width="0.85" />
<polyline points="487.8,190.0 487.8,259.8 489.5,261.5 496.0,261.5 497.7,264.0 497.7,301.0" fill="none" stroke="#00a800" stroke-width="0.85" />
<polyline points="482.8,190.0 482.8,257.0" fill="none" stroke="#00a800" stroke-width="0.85" />
<polyline points="514.6,262.0 512.0,265.0 512.0,318.0 509.0,322.0 506.0,322.0" fill="none" stroke="#a00000" stroke-width="0.8" />
<polyline points="510.5,256.0 510.5,262.0 509.0,264.0" fill="none" stroke="#a00000" stroke-width="0.8" />
<rect x="317.2" y="151.4" width="5.6" height="5.6" fill="#b4ac14" />
<rect x="326.4" y="151.4" width="5.6" height="5.6" fill="#b4ac14" />
<rect x="335.5" y="151.4" width="5.6" height="5.6" fill="#b4ac14" />
<rect x="344.7" y="151.4" width="5.6" height="5.6" fill="#b4ac14" />
<rect x="353.9" y="151.4" width="5.6" height="5.6" fill="#b4ac14" />
<rect x="363.1" y="151.4" width="5.6" height="5.6" fill="#b4ac14" />
<rect x="372.2" y="151.4" width="5.6" height="5.6" fill="#b4ac14" />
<rect x="381.4" y="151.4" width="5.6" height="5.6" fill="#b4ac14" />
<rect x="390.6" y="151.4" width="5.6" height="5.6" fill="#b4ac14" />
<rect x="321.7" y="160.9" width="5.6" height="5.6" fill="#b4ac14" />
<rect x="330.8" y="160.9" width="5.6" height="5.6" fill="#b4ac14" />
<rect x="340.0" y="160.9" width="5.6" height="5.6" fill="#b4ac14" />
<rect x="349.1" y="160.9" width="5.6" height="5.6" fill="#b4ac14" />
<rect x="358.2" y="160.9" width="5.6" height="5.6" fill="#b4ac14" />
<rect x="367.3" y="160.9" width="5.6" height="5.6" fill="#b4ac14" />
<rect x="376.5" y="160.9" width="5.6" height="5.6" fill="#b4ac14" />
<rect x="385.6" y="160.9" width="5.6" height="5.6" fill="#b4ac14" />
<rect x="321.7" y="169.9" width="5.6" height="5.6" fill="#b4ac14" />
<rect x="330.8" y="169.9" width="5.6" height="5.6" fill="#b4ac14" />
<rect x="340.0" y="169.9" width="5.6" height="5.6" fill="#b4ac14" />
<rect x="349.1" y="169.9" width="5.6" height="5.6" fill="#b4ac14" />
<rect x="358.2" y="169.9" width="5.6" height="5.6" fill="#b4ac14" />
<rect x="367.3" y="169.9" width="5.6" height="5.6" fill="#b4ac14" />
<rect x="376.5" y="169.9" width="5.6" height="5.6" fill="#b4ac14" />
<rect x="385.6" y="169.9" width="5.6" height="5.6" fill="#b4ac14" />
<rect x="294.5" y="174.1" width="5.6" height="5.6" fill="#b4ac14" />
<rect x="294.5" y="184.0" width="5.6" height="5.6" fill="#b4ac14" />
<rect x="294.5" y="192.4" width="5.6" height="5.6" fill="#b4ac14" />
<rect x="294.5" y="202.0" width="5.6" height="5.6" fill="#b4ac14" />
<rect x="294.5" y="210.9" width="5.6" height="5.6" fill="#b4ac14" />
<rect x="294.5" y="220.0" width="5.6" height="5.6" fill="#b4ac14" />
<rect x="294.5" y="228.8" width="5.6" height="5.6" fill="#b4ac14" />
<rect x="294.5" y="238.0" width="5.6" height="5.6" fill="#b4ac14" />
<rect x="294.5" y="247.4" width="5.6" height="5.6" fill="#b4ac14" />
<rect x="303.5" y="179.1" width="5.6" height="5.6" fill="#b4ac14" />
<rect x="312.7" y="179.1" width="5.6" height="5.6" fill="#b4ac14" />
<rect x="303.5" y="188.1" width="5.6" height="5.6" fill="#b4ac14" />
<rect x="312.7" y="188.1" width="5.6" height="5.6" fill="#b4ac14" />
<rect x="303.5" y="196.9" width="5.6" height="5.6" fill="#b4ac14" />
<rect x="312.7" y="196.9" width="5.6" height="5.6" fill="#b4ac14" />
<rect x="303.5" y="206.1" width="5.6" height="5.6" fill="#b4ac14" />
<rect x="312.7" y="206.1" width="5.6" height="5.6" fill="#b4ac14" />
<rect x="303.5" y="215.2" width="5.6" height="5.6" fill="#b4ac14" />
<rect x="312.7" y="215.2" width="5.6" height="5.6" fill="#b4ac14" />
<rect x="303.5" y="224.7" width="5.6" height="5.6" fill="#b4ac14" />
<rect x="312.7" y="224.7" width="5.6" height="5.6" fill="#b4ac14" />
<rect x="303.5" y="234.2" width="5.6" height="5.6" fill="#b4ac14" />
<rect x="312.7" y="234.2" width="5.6" height="5.6" fill="#b4ac14" />
<rect x="303.5" y="243.3" width="5.6" height="5.6" fill="#b4ac14" />
<rect x="312.7" y="243.3" width="5.6" height="5.6" fill="#b4ac14" />
<rect x="395.5" y="179.1" width="5.6" height="5.6" fill="#b4ac14" />
<rect x="404.5" y="179.1" width="5.6" height="5.6" fill="#b4ac14" />
<rect x="395.5" y="188.2" width="5.6" height="5.6" fill="#b4ac14" />
<rect x="404.5" y="188.2" width="5.6" height="5.6" fill="#b4ac14" />
<rect x="395.5" y="197.4" width="5.6" height="5.6" fill="#b4ac14" />
<rect x="404.5" y="197.4" width="5.6" height="5.6" fill="#b4ac14" />
<rect x="395.5" y="206.5" width="5.6" height="5.6" fill="#b4ac14" />
<rect x="404.5" y="206.5" width="5.6" height="5.6" fill="#b4ac14" />
<rect x="395.5" y="215.6" width="5.6" height="5.6" fill="#b4ac14" />
<rect x="404.5" y="215.6" width="5.6" height="5.6" fill="#b4ac14" />
<rect x="395.5" y="224.8" width="5.6" height="5.6" fill="#b4ac14" />
<rect x="404.5" y="224.8" width="5.6" height="5.6" fill="#b4ac14" />
<rect x="395.5" y="233.9" width="5.6" height="5.6" fill="#b4ac14" />
<rect x="404.5" y="233.9" width="5.6" height="5.6" fill="#b4ac14" />
<rect x="395.5" y="243.0" width="5.6" height="5.6" fill="#b4ac14" />
<rect x="404.5" y="243.0" width="5.6" height="5.6" fill="#b4ac14" />
<rect x="413.5" y="174.3" width="5.6" height="5.6" fill="#b4ac14" />
<rect x="413.5" y="183.4" width="5.6" height="5.6" fill="#b4ac14" />
<rect x="413.5" y="192.6" width="5.6" height="5.6" fill="#b4ac14" />
<rect x="413.5" y="201.7" width="5.6" height="5.6" fill="#b4ac14" />
<rect x="413.5" y="210.8" width="5.6" height="5.6" fill="#b4ac14" />
<rect x="413.5" y="219.9" width="5.6" height="5.6" fill="#b4ac14" />
<rect x="413.5" y="229.1" width="5.6" height="5.6" fill="#b4ac14" />
<rect x="413.5" y="238.2" width="5.6" height="5.6" fill="#b4ac14" />
<rect x="413.5" y="247.3" width="5.6" height="5.6" fill="#b4ac14" />
<rect x="321.8" y="252.1" width="5.6" height="5.6" fill="#b4ac14" />
<rect x="321.8" y="261.2" width="5.6" height="5.6" fill="#b4ac14" />
<rect x="330.9" y="252.1" width="5.6" height="5.6" fill="#b4ac14" />
<rect x="330.9" y="261.2" width="5.6" height="5.6" fill="#b4ac14" />
<rect x="340.0" y="252.1" width="5.6" height="5.6" fill="#b4ac14" />
<rect x="340.0" y="261.2" width="5.6" height="5.6" fill="#b4ac14" />
<rect x="349.1" y="252.1" width="5.6" height="5.6" fill="#b4ac14" />
<rect x="349.1" y="261.2" width="5.6" height="5.6" fill="#b4ac14" />
<rect x="358.2" y="252.1" width="5.6" height="5.6" fill="#b4ac14" />
<rect x="358.2" y="261.2" width="5.6" height="5.6" fill="#b4ac14" />
<rect x="367.3" y="252.1" width="5.6" height="5.6" fill="#b4ac14" />
<rect x="367.3" y="261.2" width="5.6" height="5.6" fill="#b4ac14" />
<rect x="376.4" y="252.1" width="5.6" height="5.6" fill="#b4ac14" />
<rect x="376.4" y="261.2" width="5.6" height="5.6" fill="#b4ac14" />
<rect x="385.5" y="252.1" width="5.6" height="5.6" fill="#b4ac14" />
<rect x="385.5" y="261.2" width="5.6" height="5.6" fill="#b4ac14" />
<rect x="340.5" y="128.9" width="4.8" height="4.8" fill="#b4ac14" />
<rect x="358.6" y="128.9" width="4.8" height="4.8" fill="#b4ac14" />
<text x="344.4" y="125.8" font-size="8.6" fill="#1818b8" font-family="Liberation Mono" transform="rotate(0 344.4 125.8)">C01</text>
<line x1="345.4" y1="131.3" x2="350.34999999999997" y2="131.3" stroke="#1818b8" stroke-width="0.8" />
<line x1="353.55" y1="131.3" x2="358.5" y2="131.3" stroke="#1818b8" stroke-width="0.8" />
<line x1="350.34999999999997" y1="127.70000000000002" x2="350.34999999999997" y2="134.9" stroke="#1818b8" stroke-width="0.9" />
<line x1="353.55" y1="127.70000000000002" x2="353.55" y2="134.9" stroke="#1818b8" stroke-width="0.9" />
<polyline points="292.5,272.0 292.5,149.5 421.8,149.5 421.8,272.0" fill="none" stroke="#1818b8" stroke-width="0.9" />
<line x1="362.5" y1="149.6" x2="397.7" y2="149.6" stroke="#00a0a0" stroke-width="0.9" />
<rect x="272.0" y="202.3" width="5" height="5" fill="#b4ac14" />
<rect x="272.0" y="220.3" width="5" height="5" fill="#b4ac14" />
<text x="286.4" y="223" font-size="7.5" fill="#1818b8" font-family="Liberation Mono" transform="rotate(-90 286.4 223)">C04</text>
<polyline points="262.0,201.0 268.0,201.0 270.0,199.0 283.0,199.0 285.0,201.0 291.0,201.0" fill="none" stroke="#8c8c00" stroke-width="0.9" />
<polyline points="262.0,246.5 290.0,246.5" fill="none" stroke="#8c8c00" stroke-width="0.9" />
<polyline points="262.0,196.0 272.0,196.0 274.0,194.0 283.0,194.0" fill="none" stroke="#00a800" stroke-width="0.85" />
<polyline points="262.0,243.5 292.0,243.5" fill="none" stroke="#00a800" stroke-width="0.85" />
<polyline points="285.0,186.0 285.0,200.0 287.0,203.0 291.0,203.0" fill="none" stroke="#00a800" stroke-width="0.85" />
<line x1="262" y1="210" x2="292" y2="210" stroke="#a00000" stroke-width="0.8" />
<line x1="262" y1="218.6" x2="292" y2="218.6" stroke="#a00000" stroke-width="0.8" />
<line x1="262" y1="263.8" x2="320" y2="263.8" stroke="#a00000" stroke-width="0.8" />
<line x1="262" y1="267.6" x2="320" y2="267.6" stroke="#a00000" stroke-width="0.8" />
<line x1="262" y1="251" x2="292" y2="251" stroke="#a00000" stroke-width="0.8" />
<text x="355.6" y="244.4" font-size="8.4" fill="#1818b8" font-family="Liberation Mono" transform="rotate(-90 355.6 244.4)">IC01</text>
<text x="365.4" y="245.4" font-size="8.4" fill="#1818b8" font-family="Liberation Mono" transform="rotate(-90 365.4 245.4)">386SX</text>
<rect x="445.4" y="147.0" width="5.4" height="5.4" fill="#b4ac14" />
<rect x="445.4" y="156.3" width="5.4" height="5.4" fill="#b4ac14" />
<rect x="445.4" y="165.5" width="5.4" height="5.4" fill="#b4ac14" />
<rect x="445.4" y="174.0" width="5.4" height="5.4" fill="#b4ac14" />
<rect x="445.4" y="183.7" width="5.4" height="5.4" fill="#b4ac14" />
<rect x="445.4" y="192.5" width="5.4" height="5.4" fill="#b4ac14" />
<rect x="445.4" y="201.7" width="5.4" height="5.4" fill="#b4ac14" />
<rect x="445.4" y="210.8" width="5.4" height="5.4" fill="#b4ac14" />
<rect x="445.4" y="220.1" width="5.4" height="5.4" fill="#b4ac14" />
<rect x="445.4" y="229.0" width="5.4" height="5.4" fill="#b4ac14" />
<rect x="446" y="157" width="4.2" height="4.2" fill="#c4c4a0" />
<rect x="473.1" y="165.2" width="5.4" height="5.4" fill="#b4ac14" />
<rect x="500.5" y="165.2" width="5.4" height="5.4" fill="#b4ac14" />
<rect x="473.1" y="174.4" width="5.4" height="5.4" fill="#b4ac14" />
<rect x="500.5" y="174.4" width="5.4" height="5.4" fill="#b4ac14" />
<rect x="473.1" y="183.5" width="5.4" height="5.4" fill="#b4ac14" />
<rect x="500.5" y="183.5" width="5.4" height="5.4" fill="#b4ac14" />
<rect x="473.1" y="192.7" width="5.4" height="5.4" fill="#b4ac14" />
<rect x="500.5" y="192.7" width="5.4" height="5.4" fill="#b4ac14" />
<rect x="473.1" y="201.9" width="5.4" height="5.4" fill="#b4ac14" />
<rect x="500.5" y="201.9" width="5.4" height="5.4" fill="#b4ac14" />
<rect x="473.1" y="211.1" width="5.4" height="5.4" fill="#b4ac14" />
<rect x="500.5" y="211.1" width="5.4" height="5.4" fill="#b4ac14" />
<rect x="473.1" y="220.2" width="5.4" height="5.4" fill="#b4ac14" />
<rect x="500.5" y="220.2" width="5.4" height="5.4" fill="#b4ac14" />
<rect x="473.1" y="229.4" width="5.4" height="5.4" fill="#b4ac14" />
<rect x="500.5" y="229.4" width="5.4" height="5.4" fill="#b4ac14" />
<rect x="473.1" y="238.6" width="5.4" height="5.4" fill="#b4ac14" />
<rect x="500.5" y="238.6" width="5.4" height="5.4" fill="#b4ac14" />
<rect x="473.1" y="247.7" width="5.4" height="5.4" fill="#b4ac14" />
<rect x="500.5" y="247.7" width="5.4" height="5.4" fill="#b4ac14" />
<polyline points="444.2,236.0 444.2,145.6 452.8,145.6 452.8,236.0 444.2,236.0" fill="none" stroke="#1818b8" stroke-width="0.9" />
<polyline points="440.0,163.6 509.0,163.6 509.0,170.0" fill="none" stroke="#00a0a0" stroke-width="0.8" />
<polyline points="471.6,163.6 471.6,256.0 509.4,256.0" fill="none" stroke="#1818b8" stroke-width="0.8" />
<text x="493.4" y="191" font-size="8.6" fill="#1818b8" font-family="Liberation Mono" transform="rotate(-90 493.4 191)">IC22</text>
<rect x="445.6" y="243.5" width="5" height="5" fill="#b4ac14" />
<rect x="445.6" y="261.3" width="5" height="5" fill="#b4ac14" />
<text x="440.6" y="263.6" font-size="8.4" fill="#1818b8" font-family="Liberation Mono" transform="rotate(-90 440.6 263.6)">C02</text>
<line x1="448.1" y1="249" x2="448.1" y2="253.6" stroke="#1818b8" stroke-width="0.8" />
<line x1="448.1" y1="256.4" x2="448.1" y2="261" stroke="#1818b8" stroke-width="0.8" />
<line x1="444.4" y1="253.6" x2="451.8" y2="253.6" stroke="#1818b8" stroke-width="0.9" />
<line x1="444.4" y1="256.4" x2="451.8" y2="256.4" stroke="#1818b8" stroke-width="0.9" />
<polyline points="423.0,238.0 423.0,256.0 426.0,259.0 500.0,259.0 503.0,256.0" fill="none" stroke="#a00000" stroke-width="0.9" />
<polyline points="433.0,280.0 462.0,280.0 462.0,320.0" fill="none" stroke="#a00000" stroke-width="0.8" />
<rect x="462.6" y="300" width="36.6" height="20" fill="none" stroke="#00a0a0" stroke-width="0.8"/>
<rect x="464.0" y="302.0" width="5.2" height="5.2" fill="#b4ac14" />
<rect x="464.0" y="311.6" width="5.2" height="5.2" fill="#b4ac14" />
<rect x="491.4" y="302.0" width="5.2" height="5.2" fill="#b4ac14" />
<rect x="491.4" y="311.6" width="5.2" height="5.2" fill="#b4ac14" />
<line x1="469" y1="302.4" x2="491" y2="302.4" stroke="#a00000" stroke-width="0.8" />
<line x1="469" y1="309.4" x2="491" y2="309.4" stroke="#a00000" stroke-width="0.8" />
<rect x="464.0" y="302.0" width="5.2" height="5.2" fill="#b4ac14" />
<rect x="491.4" y="302.0" width="5.2" height="5.2" fill="#b4ac14" />
<rect x="464.0" y="311.1" width="5.2" height="5.2" fill="#b4ac14" />
<rect x="491.4" y="311.1" width="5.2" height="5.2" fill="#b4ac14" />
<rect x="464.0" y="320.3" width="5.2" height="5.2" fill="#b4ac14" />
<rect x="491.4" y="320.3" width="5.2" height="5.2" fill="#b4ac14" />
<rect x="464.0" y="329.4" width="5.2" height="5.2" fill="#b4ac14" />
<rect x="491.4" y="329.4" width="5.2" height="5.2" fill="#b4ac14" />
<rect x="464.0" y="338.5" width="5.2" height="5.2" fill="#b4ac14" />
<rect x="491.4" y="338.5" width="5.2" height="5.2" fill="#b4ac14" />
<rect x="464.0" y="347.6" width="5.2" height="5.2" fill="#b4ac14" />
<rect x="491.4" y="347.6" width="5.2" height="5.2" fill="#b4ac14" />
<rect x="464.0" y="356.8" width="5.2" height="5.2" fill="#b4ac14" />
<rect x="491.4" y="356.8" width="5.2" height="5.2" fill="#b4ac14" />
<rect x="464.0" y="365.9" width="5.2" height="5.2" fill="#b4ac14" />
<rect x="491.4" y="365.9" width="5.2" height="5.2" fill="#b4ac14" />
<rect x="464.0" y="375.0" width="5.2" height="5.2" fill="#b4ac14" />
<rect x="491.4" y="375.0" width="5.2" height="5.2" fill="#b4ac14" />
<rect x="464.0" y="384.2" width="5.2" height="5.2" fill="#b4ac14" />
<rect x="491.4" y="384.2" width="5.2" height="5.2" fill="#b4ac14" />
<polyline points="462.6,320.0 462.6,391.4 499.2,391.4 499.2,320.0" fill="none" stroke="#1818b8" stroke-width="0.8" />
<text x="484.6" y="382" font-size="8.6" fill="#1818b8" font-family="Liberation Mono" transform="rotate(-90 484.6 382)">IC08</text>
<polyline points="462.4,315.0 459.4,318.0 459.4,385.0 456.0,388.0 425.0,388.0" fill="none" stroke="#00a800" stroke-width="0.9" />
<polyline points="462.4,381.0 460.0,378.6 430.0,378.6" fill="none" stroke="#00a800" stroke-width="0.9" />
<polyline points="469.0,344.6 485.0,344.6 487.6,347.0 487.6,388.0 490.0,390.4" fill="none" stroke="#00a800" stroke-width="0.9" />
<polyline points="469.0,362.6 483.0,362.6 485.0,364.6 485.0,386.0 488.0,392.0 488.0,396.0 507.0,396.0 507.0,330.0" fill="none" stroke="#00a800" stroke-width="0.9" />
<polyline points="498.0,330.0 498.0,392.0 495.0,394.6" fill="none" stroke="#00a0a0" stroke-width="0.8" />
<polyline points="500.6,392.0 498.0,394.0" fill="none" stroke="#8c8c00" stroke-width="0.9" />
<polyline points="492.3,392.0 492.3,419.0 490.3,420.8 430.0,420.8" fill="none" stroke="#a00000" stroke-width="0.75" />
<polyline points="494.2,392.0 494.2,420.8 492.2,422.6 430.0,422.6" fill="none" stroke="#a00000" stroke-width="0.75" />
<polyline points="496.0,392.0 496.0,422.6 494.0,424.4 430.0,424.4" fill="none" stroke="#a00000" stroke-width="0.75" />
<polyline points="497.9,392.0 497.9,424.4 495.9,426.2 430.0,426.2" fill="none" stroke="#a00000" stroke-width="0.75" />
<polyline points="432.0,419.2 439.5,419.2 439.5,300.0" fill="none" stroke="#1818b8" stroke-width="0.9" />
<rect x="430" y="442.2" width="32.2" height="36" fill="none" stroke="#1818b8" stroke-width="0.9"/>
<rect x="436.4" y="444.4" width="5.2" height="5.2" fill="#b4ac14" />
<rect x="436.4" y="471.7" width="5.2" height="5.2" fill="#b4ac14" />
<rect x="445.4" y="444.4" width="5.2" height="5.2" fill="#b4ac14" />
<rect x="445.4" y="471.7" width="5.2" height="5.2" fill="#b4ac14" />
<rect x="454.7" y="444.4" width="5.2" height="5.2" fill="#b4ac14" />
<rect x="454.7" y="471.7" width="5.2" height="5.2" fill="#b4ac14" />
<polyline points="446.6,449.0 446.6,465.3 444.6,467.4 430.0,467.4" fill="none" stroke="#a00000" stroke-width="0.9" />
<line x1="535.5" y1="108.5" x2="535.5" y2="492.3" stroke="#1010d8" stroke-width="1.1" />
<polyline points="433.5,169.8 433.5,217.3 434.5,218.3 480.0,218.3" fill="none" stroke="#00a800" stroke-width="0.9" />
<polyline points="431.0,170.8 431.0,226.2 441.4,226.2 445.4,223.2" fill="none" stroke="#00a800" stroke-width="0.9" />
<polyline points="428.5,172.0 428.5,234.0 429.5,235.0 480.0,235.0" fill="none" stroke="#00a800" stroke-width="0.9" />
<polyline points="426.0,175.7 426.0,253.0 424.0,256.0" fill="none" stroke="#00a800" stroke-width="0.9" />
<polyline points="418.6,172.8 422.0,175.4 422.0,257.0" fill="none" stroke="#c8c8c8" stroke-width="0.8" />
<polyline points="384.0,186.0 385.4,212.4 388.0,211.6 395.0,211.6" fill="none" stroke="#00a800" stroke-width="0.8" />
<polyline points="384.4,270.0 384.4,214.0 386.4,212.0 395.0,212.0" fill="none" stroke="#00a800" stroke-width="0.85" />
<line x1="409.7" y1="169.8" x2="443.4" y2="169.8" stroke="#a00000" stroke-width="0.85" />
<line x1="380" y1="179.3" x2="445.4" y2="179.3" stroke="#a00000" stroke-width="0.85" />
<line x1="420.6" y1="191.6" x2="445.4" y2="191.6" stroke="#a00000" stroke-width="0.85" />
<line x1="409.7" y1="200.5" x2="445.4" y2="200.5" stroke="#a00000" stroke-width="0.85" />
<polyline points="395.6,170.6 392.8,174.0 392.8,245.0 395.6,248.0" fill="none" stroke="#a00000" stroke-width="0.85" />
<polyline points="380.0,229.4 392.0,229.4 395.0,232.0 424.0,232.0" fill="none" stroke="#a00000" stroke-width="0.85" />
<polyline points="380.0,241.6 390.0,241.6 394.0,237.4 396.0,237.4" fill="none" stroke="#a00000" stroke-width="0.85" />
<polyline points="421.8,241.0 451.5,241.0 453.5,245.5 506.0,245.5 508.0,243.5 508.0,236.0" fill="none" stroke="#a00000" stroke-width="0.9" />
<polyline points="410.0,218.0 425.0,218.0 428.0,222.8 445.0,222.8" fill="none" stroke="#a00000" stroke-width="0.85" />
<polyline points="307.5,186.2 320.5,186.2 320.5,195.0 322.8,197.4 322.8,226.0 325.0,230.0 327.3,243.8 358.0,243.8" fill="none" stroke="#a00000" stroke-width="0.85" />
<polyline points="323.5,241.5 358.0,241.5" fill="none" stroke="#a00000" stroke-width="0.8" />
<polyline points="318.0,247.6 358.0,247.6" fill="none" stroke="#a00000" stroke-width="0.8" />
<polyline points="320.5,230.0 320.5,268.0" fill="none" stroke="#00a800" stroke-width="0.85" />
<polyline points="320.5,230.0 324.6,230.0" fill="none" stroke="#00a800" stroke-width="0.85" />
<polyline points="325.8,247.0 341.0,247.0 344.0,250.0 344.0,268.0" fill="none" stroke="#00a800" stroke-width="0.85" />
<polyline points="319.0,179.2 393.6,179.2" fill="none" stroke="#a00000" stroke-width="0.85" />
<polyline points="323.0,241.0 389.0,241.0 393.0,237.0" fill="none" stroke="#a00000" stroke-width="0.85" />
<polyline points="325.5,243.4 392.0,243.4 395.6,246.2" fill="none" stroke="#a00000" stroke-width="0.85" />
<polyline points="328.0,245.8 390.0,245.8" fill="none" stroke="#a00000" stroke-width="0.85" />
<line x1="301.5" y1="180" x2="358" y2="225.6" stroke="#e800e8" stroke-width="0.95" />
<line x1="358" y1="225.6" x2="432" y2="284" stroke="#e800e8" stroke-width="0.95" />
<line x1="370.3" y1="163.7" x2="273.4" y2="272" stroke="#e800e8" stroke-width="0.95" />
<line x1="370.3" y1="163.7" x2="372" y2="162" stroke="#e800e8" stroke-width="0.95" />
<line x1="267.3" y1="215" x2="358" y2="252" stroke="#e800e8" stroke-width="0.95" />
<line x1="262" y1="226" x2="300" y2="240" stroke="#e800e8" stroke-width="0.95" />
<line x1="300" y1="240" x2="364" y2="264" stroke="#e800e8" stroke-width="0.95" />
<line x1="262" y1="236" x2="330" y2="258" stroke="#e800e8" stroke-width="0.95" />
<line x1="262" y1="247" x2="345" y2="262" stroke="#e800e8" stroke-width="0.95" />
<line x1="262" y1="256" x2="300" y2="252" stroke="#e800e8" stroke-width="0.95" />
<line x1="316" y1="199" x2="297" y2="272" stroke="#e800e8" stroke-width="0.95" />
<line x1="307" y1="206" x2="282" y2="272" stroke="#e800e8" stroke-width="0.95" />
<line x1="297" y1="237" x2="270" y2="272" stroke="#e800e8" stroke-width="0.95" />
<line x1="316" y1="227" x2="300" y2="272" stroke="#e800e8" stroke-width="0.95" />
<line x1="358" y1="252" x2="420" y2="272" stroke="#e800e8" stroke-width="0.95" />
<line x1="416" y1="242.5" x2="363" y2="272" stroke="#e800e8" stroke-width="0.95" />
<line x1="330" y1="258" x2="400" y2="272" stroke="#e800e8" stroke-width="0.95" />
<line x1="297" y1="250" x2="345" y2="266" stroke="#e800e8" stroke-width="0.95" />
<line x1="476" y1="241.6" x2="442.6" y2="320" stroke="#e800e8" stroke-width="0.95" />
<line x1="442.6" y1="320" x2="425" y2="360" stroke="#e800e8" stroke-width="0.95" />
<line x1="432" y1="290" x2="494" y2="314" stroke="#e800e8" stroke-width="0.95" />
<line x1="432" y1="296" x2="492" y2="312" stroke="#e800e8" stroke-width="0.95" />
<line x1="430" y1="303" x2="494" y2="322.8" stroke="#e800e8" stroke-width="0.95" />
<line x1="430" y1="316" x2="494" y2="341" stroke="#e800e8" stroke-width="0.95" />
<line x1="430" y1="326" x2="494" y2="350" stroke="#e800e8" stroke-width="0.95" />
<line x1="430" y1="336" x2="494" y2="359.4" stroke="#e800e8" stroke-width="0.95" />
<line x1="430" y1="348" x2="466.6" y2="359.4" stroke="#e800e8" stroke-width="0.95" />
<line x1="430" y1="368" x2="466.6" y2="377.6" stroke="#e800e8" stroke-width="0.95" />
<line x1="466.6" y1="314" x2="494" y2="341" stroke="#e800e8" stroke-width="0.95" />
<line x1="430" y1="396" x2="494" y2="377.6" stroke="#e800e8" stroke-width="0.95" />
<line x1="447" y1="300" x2="430" y2="342" stroke="#e800e8" stroke-width="0.95" />
<line x1="466.6" y1="304.6" x2="430" y2="300" stroke="#e800e8" stroke-width="0.95" />
<rect x="138.8" y="455.0" width="5.4" height="5.4" fill="#b4ac14" />
<rect x="138.8" y="462.3" width="5.4" height="5.4" fill="#b4ac14" />
<rect x="166.3" y="455.0" width="5.4" height="5.4" fill="#b4ac14" />
<rect x="166.3" y="462.3" width="5.4" height="5.4" fill="#b4ac14" />
<rect x="180.0" y="455.0" width="5.4" height="5.4" fill="#b4ac14" />
<rect x="180.0" y="462.3" width="5.4" height="5.4" fill="#b4ac14" />
<rect x="207.3" y="455.0" width="5.4" height="5.4" fill="#b4ac14" />
<rect x="207.3" y="462.3" width="5.4" height="5.4" fill="#b4ac14" />
<rect x="143.7" y="480.7" width="5.2" height="5.2" fill="#b4ac14" />
<rect x="161.6" y="480.7" width="5.2" height="5.2" fill="#b4ac14" />
<rect x="184.7" y="480.7" width="5.2" height="5.2" fill="#b4ac14" />
<rect x="203.0" y="480.7" width="5.2" height="5.2" fill="#b4ac14" />
<rect x="221.2" y="476.2" width="5.2" height="5.2" fill="#b4ac14" />
<rect x="248.9" y="467.2" width="5.2" height="5.2" fill="#b4ac14" />
<line x1="148.8" y1="483.3" x2="153.65" y2="483.3" stroke="#1818b8" stroke-width="0.8" />
<line x1="156.85" y1="483.3" x2="161.7" y2="483.3" stroke="#1818b8" stroke-width="0.8" />
<line x1="153.65" y1="479.7" x2="153.65" y2="486.90000000000003" stroke="#1818b8" stroke-width="0.9" />
<line x1="156.85" y1="479.7" x2="156.85" y2="486.90000000000003" stroke="#1818b8" stroke-width="0.9" />
<line x1="189.8" y1="483.3" x2="194.85" y2="483.3" stroke="#1818b8" stroke-width="0.8" />
<line x1="198.04999999999998" y1="483.3" x2="203.1" y2="483.3" stroke="#1818b8" stroke-width="0.8" />
<line x1="194.85" y1="479.7" x2="194.85" y2="486.90000000000003" stroke="#1818b8" stroke-width="0.9" />
<line x1="198.04999999999998" y1="479.7" x2="198.04999999999998" y2="486.90000000000003" stroke="#1818b8" stroke-width="0.9" />
<text x="146.6" y="478.6" font-size="8.4" fill="#1818b8" font-family="Liberation Mono" transform="rotate(0 146.6 478.6)">C11</text>
<text x="188" y="478.6" font-size="8.4" fill="#1818b8" font-family="Liberation Mono" transform="rotate(0 188 478.6)">C12</text>
<text x="229.4" y="474.6" font-size="8" fill="#1818b8" font-family="Liberation Mono" transform="rotate(-90 229.4 474.6)">R03</text>
<text x="247.6" y="470.6" font-size="8.6" fill="#1818b8" font-family="Liberation Mono" transform="rotate(-90 247.6 470.6)">C1</text>
<line x1="251.5" y1="462" x2="251.5" y2="466.5" stroke="#1818b8" stroke-width="0.8" />
<line x1="248" y1="462.4" x2="255" y2="462.4" stroke="#1818b8" stroke-width="0.9" />
<polyline points="128.0,440.0 128.0,474.0 130.6,476.6 166.0,476.6 172.4,481.4 183.0,481.4 184.2,482.6 184.2,487.2 185.4,488.4 262.0,488.4" fill="none" stroke="#00a800" stroke-width="0.95" />
<polyline points="133.0,440.0 133.0,469.0 136.0,472.0 174.4,472.0 178.4,477.0 262.0,477.0" fill="none" stroke="#00a800" stroke-width="0.95" />
<polyline points="137.0,440.0 137.0,470.4 174.4,470.4 174.4,440.0" fill="none" stroke="#1818b8" stroke-width="0.9" />
<polyline points="175.4,440.0 175.4,468.0 178.0,470.6 203.0,470.6 205.6,468.4 216.0,468.4 218.4,470.6 218.4,474.6 229.0,474.6 229.0,456.0" fill="none" stroke="#e800e8" stroke-width="0.9" />
<line x1="218.8" y1="456" x2="218.8" y2="474" stroke="#e800e8" stroke-width="0.8" />
<polyline points="203.6,440.0 203.6,458.6 206.4,461.4 218.0,461.4" fill="none" stroke="#a00000" stroke-width="0.9" />
<polyline points="217.0,456.0 217.0,484.6 219.0,486.6 262.0,486.6" fill="none" stroke="#a00000" stroke-width="0.9" />
<polyline points="219.4,456.0 219.4,482.8 221.0,484.4 262.0,484.4" fill="none" stroke="#a00000" stroke-width="0.9" />
<polyline points="221.0,458.0 262.0,458.0" fill="none" stroke="#a00000" stroke-width="0.9" />
<polyline points="229.0,474.6 232.0,477.6 234.0,478.8 262.0,478.8" fill="none" stroke="#a00000" stroke-width="0.9" />
<polyline points="226.0,478.8 232.0,481.6 262.0,481.6" fill="none" stroke="#a00000" stroke-width="0.9" />
<polyline points="258.6,440.0 258.6,484.4 260.6,486.4 262.0,486.4" fill="none" stroke="#00a800" stroke-width="0.95" />
<line x1="261.6" y1="440" x2="261.6" y2="480" stroke="#00a0a0" stroke-width="0.9" />
<rect x="115.9" y="165.3" width="5" height="5" fill="#b4ac14" />
<rect x="115.9" y="192.1" width="5" height="5" fill="#b4ac14" />
<rect x="115.6" y="171" width="4.6" height="21" fill="#0c0c9c" />
<polyline points="120.4,236.0 116.8,239.6 116.8,287.6 120.4,291.2" fill="none" stroke="#00a800" stroke-width="0.9" />
<polyline points="120.0,262.0 117.4,265.0 117.4,278.0" fill="none" stroke="#8c8c00" stroke-width="0.8" />
<line x1="119.4" y1="232" x2="119.4" y2="240" stroke="#00a0a0" stroke-width="0.9" />
<line x1="119.4" y1="268" x2="119.4" y2="284" stroke="#e800e8" stroke-width="0.9" />
<line x1="70" y1="492.5" x2="101" y2="492.5" stroke="#e8e8e8" stroke-width="1.1" />
<line x1="82.4" y1="474" x2="82.4" y2="510.5" stroke="#e8e8e8" stroke-width="1.1" />
</g>
<rect x="549.6" y="38.7" width="9.5" height="523.7" fill="#ececec" />
<line x1="550" y1="38.7" x2="550" y2="562" stroke="#fafafa" stroke-width="1" />
<line x1="558.8" y1="38.7" x2="558.8" y2="562" stroke="#a8a8a8" stroke-width="0.8" />
<rect x="549.6" y="38.7" width="9.5" height="12.4" fill="#f4f4f4" />
<line x1="549.6" y1="51.3" x2="559.1" y2="51.3" stroke="#8a8a8a" stroke-width="1" />
<path d="M552.4 46.6 L554.5 44.2 L556.6 46.6 Z" fill="#111"/>
<rect x="549.6" y="550.2" width="9.6" height="12.2" fill="#f2f2f2" />
<line x1="549.6" y1="550.2" x2="559.2" y2="550.2" stroke="#aaa" stroke-width="0.9" />
<path d="M552.3 555.2 L554.4 557.7 L556.5 555.2 Z" fill="#111"/>
<rect x="69" y="563.2" width="478.4" height="9.4" fill="#ececec" />
<line x1="69" y1="563.5" x2="547.4" y2="563.5" stroke="#fafafa" stroke-width="0.8" />
<line x1="69" y1="572.4" x2="547.4" y2="572.4" stroke="#a0a0a0" stroke-width="0.8" />
<rect x="69" y="563.2" width="12" height="9.4" fill="#f2f2f2" />
<line x1="81.2" y1="563.2" x2="81.2" y2="572.6" stroke="#8a8a8a" stroke-width="1" />
<path d="M75.4 566 L72.9 568 L75.4 570 Z" fill="#111"/>
<rect x="524.4" y="563" width="11" height="9.8" fill="#f0f0f0" />
<line x1="524.2" y1="563" x2="524.2" y2="572.6" stroke="#b0b0b0" stroke-width="0.8" />
<rect x="535.6" y="563.2" width="11.8" height="9.4" fill="#e9e9e9" />
<line x1="535.6" y1="563.2" x2="535.6" y2="572.6" stroke="#d8d8d8" stroke-width="0.8" />
<path d="M540.6 566 L543.1 568 L540.6 570 Z" fill="#111"/>
<path d="M551.6 563.4 H555.8 L558.2 565.8 V569.4 L555.8 572.2 H551.6 L549.4 569.4 V565.8 Z" fill="#fff"/>
<rect x="549.2" y="576" width="9.4" height="10.2" fill="#fff" />
<rect x="549.2" y="587.2" width="9.4" height="10" fill="#fff" />
<path d="M550.2 585 L553.8 577.4 L557.6 585 Z" fill="#111"/>
<path d="M550.6 588.6 L553.9 596 L557.2 588.6 Z" fill="#777" stroke="#444" stroke-width="0.5"/>
<rect x="8" y="575" width="539.4" height="22.2" fill="#fff" />
<text x="9.4" y="584.6" font-size="10.5" fill="#2c2c2c" font-family="Liberation Mono" >Error : 0, File D:\baejobs\sysdemo.ddb</text>
<text x="9.4" y="595.6" font-size="10.5" fill="#2c2c2c" font-family="Liberation Mono" >Max. 219 of 261 Routes (Pins:470,Vias:0)</text>
<rect x="561" y="37" width="201" height="562.6" fill="#f0f0f0" />
<line x1="761.4" y1="37" x2="761.4" y2="600" stroke="#6a6a6a" stroke-width="1.2" />
<line x1="561" y1="599.4" x2="762" y2="599.4" stroke="#6a6a6a" stroke-width="1.4" />
<rect x="566" y="42.4" width="178.4" height="552.6" fill="#fff" />
<rect x="744.4" y="42.4" width="11.6" height="552.6" fill="#f0f0f0" />
<path d="M747.6 51.4 L750.2 48.6 L752.8 51.4 Z" fill="#333"/>
<path d="M747.6 587.4 L750.2 590.2 L752.8 587.4 Z" fill="#333"/>
<rect x="745" y="57.4" width="10.4" height="412" rx="1.4" fill="url(#gThumbV)" stroke="#989898" stroke-width="0.9"/>
<line x1="747.6" y1="261.79999999999995" x2="752.8" y2="261.79999999999995" stroke="#777" stroke-width="0.7" />
<line x1="747.6" y1="263.4" x2="752.8" y2="263.4" stroke="#777" stroke-width="0.7" />
<line x1="747.6" y1="265.0" x2="752.8" y2="265.0" stroke="#777" stroke-width="0.7" />
<text x="582.7" y="53.1" font-size="10.2" fill="#0a0a14" font-family="Liberation Sans" textLength="14.13" lengthAdjust="spacingAndGlyphs" stroke="#0a0a14" stroke-width="0.12" >File</text>
<rect x="570.2" y="47.7" width="6.8" height="6.8" fill="#fff" stroke="#8e8e8e" stroke-width="0.8"/>
<line x1="571.6" y1="51.1" x2="575.6" y2="51.1" stroke="#111" stroke-width="0.9" />
<line x1="573.6" y1="49.1" x2="573.6" y2="53.1" stroke="#111" stroke-width="0.9" />
<text x="582.7" y="67.3" font-size="10.2" fill="#0a0a14" font-family="Liberation Sans" textLength="15.84" lengthAdjust="spacingAndGlyphs" stroke="#0a0a14" stroke-width="0.12" >Edit</text>
<rect x="570.2" y="61.9" width="6.8" height="6.8" fill="#fff" stroke="#8e8e8e" stroke-width="0.8"/>
<line x1="571.6" y1="65.3" x2="575.6" y2="65.3" stroke="#111" stroke-width="0.9" />
<line x1="573.6" y1="63.3" x2="573.6" y2="67.3" stroke="#111" stroke-width="0.9" />
<text x="582.7" y="81.5" font-size="10.2" fill="#0a0a14" font-family="Liberation Sans" textLength="19.93" lengthAdjust="spacingAndGlyphs" stroke="#0a0a14" stroke-width="0.12" >View</text>
<rect x="570.2" y="76.1" width="6.8" height="6.8" fill="#fff" stroke="#8e8e8e" stroke-width="0.8"/>
<line x1="571.6" y1="79.5" x2="575.6" y2="79.5" stroke="#111" stroke-width="0.9" />
<line x1="573.6" y1="77.5" x2="573.6" y2="81.5" stroke="#111" stroke-width="0.9" />
<text x="582.7" y="95.69999999999999" font-size="10.2" fill="#0a0a14" font-family="Liberation Sans" textLength="20.6" lengthAdjust="spacingAndGlyphs" stroke="#0a0a14" stroke-width="0.12" >Parts</text>
<rect x="570.2" y="90.29999999999998" width="6.8" height="6.8" fill="#fff" stroke="#8e8e8e" stroke-width="0.8"/>
<line x1="571.6" y1="93.69999999999999" x2="575.6" y2="93.69999999999999" stroke="#111" stroke-width="0.9" />
<line x1="573.6" y1="91.69999999999999" x2="573.6" y2="95.69999999999999" stroke="#111" stroke-width="0.9" />
<text x="582.7" y="109.9" font-size="10.2" fill="#0a0a14" font-family="Liberation Sans" textLength="26.37" lengthAdjust="spacingAndGlyphs" stroke="#0a0a14" stroke-width="0.12" >Traces</text>
<rect x="570.2" y="104.5" width="6.8" height="6.8" fill="#fff" stroke="#8e8e8e" stroke-width="0.8"/>
<line x1="571.6" y1="107.9" x2="575.6" y2="107.9" stroke="#111" stroke-width="0.9" />
<text x="597.6" y="124.1" font-size="10.2" fill="#0a0a14" font-family="Liberation Sans" textLength="42.18" lengthAdjust="spacingAndGlyphs" stroke="#0a0a14" stroke-width="0.12" >Add Trace</text>
<text x="597.6" y="138.29999999999998" font-size="10.2" fill="#0a0a14" font-family="Liberation Sans" textLength="54.15" lengthAdjust="spacingAndGlyphs" stroke="#0a0a14" stroke-width="0.12" >Insert Corner</text>
<text x="597.6" y="152.5" font-size="10.2" fill="#0a0a14" font-family="Liberation Sans" textLength="54.34" lengthAdjust="spacingAndGlyphs" stroke="#0a0a14" stroke-width="0.12" >Move Corner</text>
<text x="597.6" y="166.7" font-size="10.2" fill="#0a0a14" font-family="Liberation Sans" textLength="57.79" lengthAdjust="spacingAndGlyphs" stroke="#0a0a14" stroke-width="0.12" >Delete Corner</text>
<text x="597.6" y="180.9" font-size="10.2" fill="#0a0a14" font-family="Liberation Sans" textLength="63.05" lengthAdjust="spacingAndGlyphs" stroke="#0a0a14" stroke-width="0.12" >Insert Segment</text>
<text x="597.6" y="195.1" font-size="10.2" fill="#0a0a14" font-family="Liberation Sans" textLength="63.24" lengthAdjust="spacingAndGlyphs" stroke="#0a0a14" stroke-width="0.12" >Move Segment</text>
<text x="597.6" y="209.29999999999998" font-size="10.2" fill="#0a0a14" font-family="Liberation Sans" textLength="62.9" lengthAdjust="spacingAndGlyphs" stroke="#0a0a14" stroke-width="0.12" >Break Segment</text>
<text x="597.6" y="223.49999999999997" font-size="10.2" fill="#0a0a14" font-family="Liberation Sans" textLength="66.69" lengthAdjust="spacingAndGlyphs" stroke="#0a0a14" stroke-width="0.12" >Delete Segment</text>
<text x="597.6" y="237.7" font-size="10.2" fill="#0a0a14" font-family="Liberation Sans" textLength="48.44" lengthAdjust="spacingAndGlyphs" stroke="#0a0a14" stroke-width="0.12" >Move Trace</text>
<text x="597.6" y="251.89999999999998" font-size="10.2" fill="#0a0a14" font-family="Liberation Sans" textLength="46.47" lengthAdjust="spacingAndGlyphs" stroke="#0a0a14" stroke-width="0.12" >Copy Trace</text>
<text x="597.6" y="266.1" font-size="10.2" fill="#0a0a14" font-family="Liberation Sans" textLength="51.89" lengthAdjust="spacingAndGlyphs" stroke="#0a0a14" stroke-width="0.12" >Delete Trace</text>
<text x="597.6" y="280.3" font-size="10.2" fill="#0a0a14" font-family="Liberation Sans" textLength="44.75" lengthAdjust="spacingAndGlyphs" stroke="#0a0a14" stroke-width="0.12" >Delete Net</text>
<text x="597.6" y="294.5" font-size="10.2" fill="#0a0a14" font-family="Liberation Sans" textLength="45.79" lengthAdjust="spacingAndGlyphs" stroke="#0a0a14" stroke-width="0.12" >Autorouter</text>
<rect x="585.1" y="289.1" width="6.8" height="6.8" fill="#fff" stroke="#8e8e8e" stroke-width="0.8"/>
<line x1="586.5" y1="292.5" x2="590.5" y2="292.5" stroke="#111" stroke-width="0.9" />
<rect x="610.4" y="298.5" width="67.52" height="13.6" fill="#ededed" />
<text x="612.5" y="308.7" font-size="10.2" fill="#0a0a14" font-family="Liberation Sans" textLength="62.92" lengthAdjust="spacingAndGlyphs" stroke="#0a0a14" stroke-width="0.12" >Full Autorouter</text>
<text x="612.5" y="322.90000000000003" font-size="10.2" fill="#0a0a14" font-family="Liberation Sans" textLength="84.72" lengthAdjust="spacingAndGlyphs" stroke="#0a0a14" stroke-width="0.12" >Complete Initial Run</text>
<text x="612.5" y="337.1" font-size="10.2" fill="#0a0a14" font-family="Liberation Sans" textLength="41.1" lengthAdjust="spacingAndGlyphs" stroke="#0a0a14" stroke-width="0.12" >Optimizer</text>
<text x="612.5" y="351.3" font-size="10.2" fill="#0a0a14" font-family="Liberation Sans" textLength="49.31" lengthAdjust="spacingAndGlyphs" stroke="#0a0a14" stroke-width="0.12" >Load Traces</text>
<text x="612.5" y="365.5" font-size="10.2" fill="#0a0a14" font-family="Liberation Sans" textLength="99.59" lengthAdjust="spacingAndGlyphs" stroke="#0a0a14" stroke-width="0.12" >Terminate Router Mode</text>
<text x="612.5" y="379.7" font-size="10.2" fill="#0a0a14" font-family="Liberation Sans" textLength="33.07" lengthAdjust="spacingAndGlyphs" stroke="#0a0a14" stroke-width="0.12" >Options</text>
<text x="612.5" y="393.9" font-size="10.2" fill="#0a0a14" font-family="Liberation Sans" textLength="31.05" lengthAdjust="spacingAndGlyphs" stroke="#0a0a14" stroke-width="0.12" >Control</text>
<text x="612.5" y="408.1" font-size="10.2" fill="#0a0a14" font-family="Liberation Sans" textLength="34.61" lengthAdjust="spacingAndGlyphs" stroke="#0a0a14" stroke-width="0.12" >Strategy</text>
<text x="612.5" y="422.3" font-size="10.2" fill="#0a0a14" font-family="Liberation Sans" textLength="92.29" lengthAdjust="spacingAndGlyphs" stroke="#0a0a14" stroke-width="0.12" >Load Control/Strategy</text>
<text x="612.5" y="436.5" font-size="10.2" fill="#0a0a14" font-family="Liberation Sans" textLength="91.23" lengthAdjust="spacingAndGlyphs" stroke="#0a0a14" stroke-width="0.12" >Save Control/Strategy</text>
<text x="612.5" y="450.7" font-size="10.2" fill="#0a0a14" font-family="Liberation Sans" textLength="49.8" lengthAdjust="spacingAndGlyphs" stroke="#0a0a14" stroke-width="0.12" >Batch Setup</text>
<text x="612.5" y="464.9" font-size="10.2" fill="#0a0a14" font-family="Liberation Sans" textLength="45.26" lengthAdjust="spacingAndGlyphs" stroke="#0a0a14" stroke-width="0.12" >Batch Start</text>
<text x="612.5" y="479.1" font-size="10.2" fill="#0a0a14" font-family="Liberation Sans" textLength="90.94" lengthAdjust="spacingAndGlyphs" stroke="#0a0a14" stroke-width="0.12" >Single Net Full Router</text>
<text x="612.5" y="493.3" font-size="10.2" fill="#0a0a14" font-family="Liberation Sans" textLength="99.14" lengthAdjust="spacingAndGlyphs" stroke="#0a0a14" stroke-width="0.12" >Single Net Initial Router</text>
<text x="612.5" y="507.5" font-size="10.2" fill="#0a0a14" font-family="Liberation Sans" textLength="86.94" lengthAdjust="spacingAndGlyphs" stroke="#0a0a14" stroke-width="0.12" >Single Net Optimizer</text>
<text x="612.5" y="521.6999999999999" font-size="10.2" fill="#0a0a14" font-family="Liberation Sans" textLength="71.91" lengthAdjust="spacingAndGlyphs" stroke="#0a0a14" stroke-width="0.12" >Route Single Part</text>
<text x="612.5" y="535.9" font-size="10.2" fill="#0a0a14" font-family="Liberation Sans" textLength="67.28" lengthAdjust="spacingAndGlyphs" stroke="#0a0a14" stroke-width="0.12" >Place and Route</text>
<text x="597.6" y="550.1" font-size="10.2" fill="#0a0a14" font-family="Liberation Sans" textLength="55.08" lengthAdjust="spacingAndGlyphs" stroke="#0a0a14" stroke-width="0.12" >Fix Trace/Net</text>
<rect x="585.1" y="544.7" width="6.8" height="6.8" fill="#fff" stroke="#8e8e8e" stroke-width="0.8"/>
<line x1="586.5" y1="548.1" x2="590.5" y2="548.1" stroke="#111" stroke-width="0.9" />
<line x1="588.5" y1="546.1" x2="588.5" y2="550.1" stroke="#111" stroke-width="0.9" />
<text x="597.6" y="564.3" font-size="10.2" fill="#0a0a14" font-family="Liberation Sans" textLength="65.27" lengthAdjust="spacingAndGlyphs" stroke="#0a0a14" stroke-width="0.12" >Unfix Trace/Net</text>
<rect x="585.1" y="558.9" width="6.8" height="6.8" fill="#fff" stroke="#8e8e8e" stroke-width="0.8"/>
<line x1="586.5" y1="562.3" x2="590.5" y2="562.3" stroke="#111" stroke-width="0.9" />
<line x1="588.5" y1="560.3" x2="588.5" y2="564.3" stroke="#111" stroke-width="0.9" />
<text x="597.6" y="578.5" font-size="10.2" fill="#0a0a14" font-family="Liberation Sans" textLength="59.69" lengthAdjust="spacingAndGlyphs" stroke="#0a0a14" stroke-width="0.12" >Change Width</text>
<rect x="585.1" y="573.1" width="6.8" height="6.8" fill="#fff" stroke="#8e8e8e" stroke-width="0.8"/>
<line x1="586.5" y1="576.5" x2="590.5" y2="576.5" stroke="#111" stroke-width="0.9" />
<line x1="588.5" y1="574.5" x2="588.5" y2="578.5" stroke="#111" stroke-width="0.9" />
<text x="597.6" y="592.7" font-size="10.2" fill="#0a0a14" font-family="Liberation Sans" textLength="50.03" lengthAdjust="spacingAndGlyphs" stroke="#0a0a14" stroke-width="0.12" >Select Via(s)</text>
<rect x="122.8" y="39.6" width="146.40000000000003" height="419.2" fill="#000" opacity="0.55" filter="url(#sh)"/>
<rect x="120.2" y="36.6" width="146.40000000000003" height="419.2" fill="#f0f0f0" stroke="#979797" stroke-width="0.9"/>
<line x1="143.6" y1="38.6" x2="143.6" y2="453.8" stroke="#e0e0e0" stroke-width="1" />
<line x1="144.5" y1="38.6" x2="144.5" y2="453.8" stroke="#fdfdfd" stroke-width="0.9" />
<text x="147.29999999999998" y="50.7" font-size="10.2" fill="#8b8b8b" font-family="Liberation Sans" textLength="42.18" lengthAdjust="spacingAndGlyphs" stroke="#8b8b8b" stroke-width="0.12" >Add Trace</text>
<line x1="144.6" y1="59.6" x2="265" y2="59.6" stroke="#dcdcdc" stroke-width="1" />
<line x1="144.6" y1="60.5" x2="265" y2="60.5" stroke="#fcfcfc" stroke-width="0.9" />
<text x="147.29999999999998" y="74.27000000000001" font-size="10.2" fill="#8b8b8b" font-family="Liberation Sans" textLength="54.15" lengthAdjust="spacingAndGlyphs" stroke="#8b8b8b" stroke-width="0.12" >Insert Corner</text>
<text x="147.29999999999998" y="91.64000000000001" font-size="10.2" fill="#8b8b8b" font-family="Liberation Sans" textLength="54.34" lengthAdjust="spacingAndGlyphs" stroke="#8b8b8b" stroke-width="0.12" >Move Corner</text>
<text x="147.29999999999998" y="109.01000000000002" font-size="10.2" fill="#8b8b8b" font-family="Liberation Sans" textLength="57.79" lengthAdjust="spacingAndGlyphs" stroke="#8b8b8b" stroke-width="0.12" >Delete Corner</text>
<line x1="144.6" y1="117.91000000000003" x2="265" y2="117.91000000000003" stroke="#dcdcdc" stroke-width="1" />
<line x1="144.6" y1="118.81000000000003" x2="265" y2="118.81000000000003" stroke="#fcfcfc" stroke-width="0.9" />
<text x="147.29999999999998" y="132.58" font-size="10.2" fill="#8b8b8b" font-family="Liberation Sans" textLength="63.05" lengthAdjust="spacingAndGlyphs" stroke="#8b8b8b" stroke-width="0.12" >Insert Segment</text>
<text x="147.29999999999998" y="149.95000000000002" font-size="10.2" fill="#8b8b8b" font-family="Liberation Sans" textLength="63.24" lengthAdjust="spacingAndGlyphs" stroke="#8b8b8b" stroke-width="0.12" >Move Segment</text>
<text x="147.29999999999998" y="167.32000000000002" font-size="10.2" fill="#8b8b8b" font-family="Liberation Sans" textLength="62.9" lengthAdjust="spacingAndGlyphs" stroke="#8b8b8b" stroke-width="0.12" >Break Segment</text>
<text x="147.29999999999998" y="184.69000000000003" font-size="10.2" fill="#8b8b8b" font-family="Liberation Sans" textLength="66.69" lengthAdjust="spacingAndGlyphs" stroke="#8b8b8b" stroke-width="0.12" >Delete Segment</text>
<line x1="144.6" y1="193.59000000000003" x2="265" y2="193.59000000000003" stroke="#dcdcdc" stroke-width="1" />
<line x1="144.6" y1="194.49000000000004" x2="265" y2="194.49000000000004" stroke="#fcfcfc" stroke-width="0.9" />
<text x="147.29999999999998" y="208.26000000000002" font-size="10.2" fill="#8b8b8b" font-family="Liberation Sans" textLength="48.44" lengthAdjust="spacingAndGlyphs" stroke="#8b8b8b" stroke-width="0.12" >Move Trace</text>
<text x="147.29999999999998" y="225.63000000000002" font-size="10.2" fill="#8b8b8b" font-family="Liberation Sans" textLength="46.47" lengthAdjust="spacingAndGlyphs" stroke="#8b8b8b" stroke-width="0.12" >Copy Trace</text>
<text x="147.29999999999998" y="243.00000000000003" font-size="10.2" fill="#8b8b8b" font-family="Liberation Sans" textLength="51.89" lengthAdjust="spacingAndGlyphs" stroke="#8b8b8b" stroke-width="0.12" >Delete Trace</text>
<text x="147.29999999999998" y="260.37" font-size="10.2" fill="#0a0a14" font-family="Liberation Sans" textLength="44.75" lengthAdjust="spacingAndGlyphs" stroke="#0a0a14" stroke-width="0.12" >Delete Net</text>
<line x1="144.6" y1="269.27" x2="265" y2="269.27" stroke="#dcdcdc" stroke-width="1" />
<line x1="144.6" y1="270.16999999999996" x2="265" y2="270.16999999999996" stroke="#fcfcfc" stroke-width="0.9" />
<rect x="122.6" y="272" width="150" height="17.4" rx="2.2" fill="url(#gSel)" stroke="#a9d7ea" stroke-width="0.9"/>
<rect x="123.39999999999999" y="272.8" width="148.4" height="15.799999999999999" rx="1.6" fill="none" stroke="#f4fafd" stroke-width="0.7"/>
<text x="147.29999999999998" y="283.94" font-size="10.2" fill="#0a0a14" font-family="Liberation Sans" textLength="45.79" lengthAdjust="spacingAndGlyphs" stroke="#0a0a14" stroke-width="0.12" >Autorouter</text>
<path d="M254.6 277.74 L257.8 280.44 L254.6 283.14 Z" fill="#111"/>
<line x1="144.6" y1="292.84" x2="265" y2="292.84" stroke="#dcdcdc" stroke-width="1" />
<line x1="144.6" y1="293.73999999999995" x2="265" y2="293.73999999999995" stroke="#fcfcfc" stroke-width="0.9" />
<text x="147.29999999999998" y="307.51" font-size="10.2" fill="#8b8b8b" font-family="Liberation Sans" textLength="55.08" lengthAdjust="spacingAndGlyphs" stroke="#8b8b8b" stroke-width="0.12" >Fix Trace/Net</text>
<path d="M254.6 301.31 L257.8 304.01 L254.6 306.71 Z" fill="#8b8b8b"/>
<text x="147.29999999999998" y="324.88" font-size="10.2" fill="#8b8b8b" font-family="Liberation Sans" textLength="65.27" lengthAdjust="spacingAndGlyphs" stroke="#8b8b8b" stroke-width="0.12" >Unfix Trace/Net</text>
<path d="M254.6 318.68 L257.8 321.38 L254.6 324.08 Z" fill="#8b8b8b"/>
<text x="147.29999999999998" y="342.25" font-size="10.2" fill="#8b8b8b" font-family="Liberation Sans" textLength="59.69" lengthAdjust="spacingAndGlyphs" stroke="#8b8b8b" stroke-width="0.12" >Change Width</text>
<path d="M254.6 336.05 L257.8 338.75 L254.6 341.45 Z" fill="#8b8b8b"/>
<line x1="144.6" y1="351.15" x2="265" y2="351.15" stroke="#dcdcdc" stroke-width="1" />
<line x1="144.6" y1="352.04999999999995" x2="265" y2="352.04999999999995" stroke="#fcfcfc" stroke-width="0.9" />
<text x="147.29999999999998" y="365.82" font-size="10.2" fill="#8b8b8b" font-family="Liberation Sans" textLength="50.03" lengthAdjust="spacingAndGlyphs" stroke="#8b8b8b" stroke-width="0.12" >Select Via(s)</text>
<text x="147.29999999999998" y="383.19" font-size="10.2" fill="#0a0a14" font-family="Liberation Sans" textLength="55.61" lengthAdjust="spacingAndGlyphs" stroke="#0a0a14" stroke-width="0.12" >Via Functions</text>
<path d="M254.6 376.99 L257.8 379.69 L254.6 382.39 Z" fill="#111"/>
<text x="245.32999999999998" y="383.19" font-size="10.2" fill="#0a0a14" font-family="Liberation Sans" textLength="5.87" lengthAdjust="spacingAndGlyphs" stroke="#0a0a14" stroke-width="0.12" >V</text>
<line x1="144.6" y1="392.09" x2="265" y2="392.09" stroke="#dcdcdc" stroke-width="1" />
<line x1="144.6" y1="392.98999999999995" x2="265" y2="392.98999999999995" stroke="#fcfcfc" stroke-width="0.9" />
<text x="147.29999999999998" y="406.76" font-size="10.2" fill="#0a0a14" font-family="Liberation Sans" textLength="56.41" lengthAdjust="spacingAndGlyphs" stroke="#0a0a14" stroke-width="0.12" >Highlight Net</text>
<path d="M254.6 400.56 L257.8 403.26 L254.6 405.96 Z" fill="#111"/>
<text x="147.29999999999998" y="424.13" font-size="10.2" fill="#0a0a14" font-family="Liberation Sans" textLength="65.33" lengthAdjust="spacingAndGlyphs" stroke="#0a0a14" stroke-width="0.12" >Net List Utilities</text>
<path d="M254.6 417.93 L257.8 420.63 L254.6 423.33 Z" fill="#111"/>
<line x1="144.6" y1="433.03" x2="265" y2="433.03" stroke="#dcdcdc" stroke-width="1" />
<line x1="144.6" y1="433.92999999999995" x2="265" y2="433.92999999999995" stroke="#fcfcfc" stroke-width="0.9" />
<text x="147.29999999999998" y="447.7" font-size="10.2" fill="#0a0a14" font-family="Liberation Sans" textLength="66.56" lengthAdjust="spacingAndGlyphs" stroke="#0a0a14" stroke-width="0.12" >Other Functions</text>
<path d="M254.6 441.5 L257.8 444.2 L254.6 446.9 Z" fill="#111"/>
<text x="241.48999999999998" y="447.7" font-size="10.2" fill="#0a0a14" font-family="Liberation Sans" textLength="9.71" lengthAdjust="spacingAndGlyphs" stroke="#0a0a14" stroke-width="0.12" >F6</text>
<rect x="265.6" y="273.6" width="169.2" height="316.79999999999995" fill="#000" opacity="0.55" filter="url(#sh)"/>
<rect x="263" y="270.6" width="169.2" height="316.79999999999995" fill="#f0f0f0" stroke="#979797" stroke-width="0.9"/>
<line x1="286.3" y1="272.6" x2="286.3" y2="585.4" stroke="#e0e0e0" stroke-width="1" />
<line x1="287.2" y1="272.6" x2="287.2" y2="585.4" stroke="#fdfdfd" stroke-width="0.9" />
<rect x="265.4" y="273" width="165.2" height="16.3" rx="2.2" fill="url(#gSel)" stroke="#a9d7ea" stroke-width="0.9"/>
<rect x="266.2" y="273.8" width="163.6" height="14.700000000000001" rx="1.6" fill="none" stroke="#f4fafd" stroke-width="0.7"/>
<text x="290.2" y="284.2" font-size="10.2" fill="#0a0a14" font-family="Liberation Sans" textLength="62.92" lengthAdjust="spacingAndGlyphs" stroke="#0a0a14" stroke-width="0.12" >Full Autorouter</text>
<text x="290.2" y="301.57" font-size="10.2" fill="#0a0a14" font-family="Liberation Sans" textLength="84.72" lengthAdjust="spacingAndGlyphs" stroke="#0a0a14" stroke-width="0.12" >Complete Initial Run</text>
<text x="290.2" y="318.94" font-size="10.2" fill="#0a0a14" font-family="Liberation Sans" textLength="41.1" lengthAdjust="spacingAndGlyphs" stroke="#0a0a14" stroke-width="0.12" >Optimizer</text>
<text x="290.2" y="336.31" font-size="10.2" fill="#8b8b8b" font-family="Liberation Sans" textLength="49.31" lengthAdjust="spacingAndGlyphs" stroke="#8b8b8b" stroke-width="0.12" >Load Traces</text>
<text x="290.2" y="353.68" font-size="10.2" fill="#0a0a14" font-family="Liberation Sans" textLength="99.59" lengthAdjust="spacingAndGlyphs" stroke="#0a0a14" stroke-width="0.12" >Terminate Router Mode</text>
<line x1="287.4" y1="362.58" x2="430.6" y2="362.58" stroke="#dcdcdc" stroke-width="1" />
<line x1="287.4" y1="363.47999999999996" x2="430.6" y2="363.47999999999996" stroke="#fcfcfc" stroke-width="0.9" />
<text x="290.2" y="377.25" font-size="10.2" fill="#0a0a14" font-family="Liberation Sans" textLength="33.07" lengthAdjust="spacingAndGlyphs" stroke="#0a0a14" stroke-width="0.12" >Options</text>
<text x="290.2" y="394.62" font-size="10.2" fill="#0a0a14" font-family="Liberation Sans" textLength="31.05" lengthAdjust="spacingAndGlyphs" stroke="#0a0a14" stroke-width="0.12" >Control</text>
<text x="290.2" y="411.99" font-size="10.2" fill="#0a0a14" font-family="Liberation Sans" textLength="34.61" lengthAdjust="spacingAndGlyphs" stroke="#0a0a14" stroke-width="0.12" >Strategy</text>
<text x="290.2" y="429.36" font-size="10.2" fill="#0a0a14" font-family="Liberation Sans" textLength="92.29" lengthAdjust="spacingAndGlyphs" stroke="#0a0a14" stroke-width="0.12" >Load Control/Strategy</text>
<text x="290.2" y="446.73" font-size="10.2" fill="#0a0a14" font-family="Liberation Sans" textLength="91.23" lengthAdjust="spacingAndGlyphs" stroke="#0a0a14" stroke-width="0.12" >Save Control/Strategy</text>
<line x1="287.4" y1="455.63" x2="430.6" y2="455.63" stroke="#dcdcdc" stroke-width="1" />
<line x1="287.4" y1="456.53" x2="430.6" y2="456.53" stroke="#fcfcfc" stroke-width="0.9" />
<text x="290.2" y="470.3" font-size="10.2" fill="#0a0a14" font-family="Liberation Sans" textLength="49.8" lengthAdjust="spacingAndGlyphs" stroke="#0a0a14" stroke-width="0.12" >Batch Setup</text>
<text x="290.2" y="487.67" font-size="10.2" fill="#0a0a14" font-family="Liberation Sans" textLength="45.26" lengthAdjust="spacingAndGlyphs" stroke="#0a0a14" stroke-width="0.12" >Batch Start</text>
<line x1="287.4" y1="496.57" x2="430.6" y2="496.57" stroke="#dcdcdc" stroke-width="1" />
<line x1="287.4" y1="497.46999999999997" x2="430.6" y2="497.46999999999997" stroke="#fcfcfc" stroke-width="0.9" />
<text x="290.2" y="511.24" font-size="10.2" fill="#0a0a14" font-family="Liberation Sans" textLength="90.94" lengthAdjust="spacingAndGlyphs" stroke="#0a0a14" stroke-width="0.12" >Single Net Full Router</text>
<text x="290.2" y="528.61" font-size="10.2" fill="#0a0a14" font-family="Liberation Sans" textLength="99.14" lengthAdjust="spacingAndGlyphs" stroke="#0a0a14" stroke-width="0.12" >Single Net Initial Router</text>
<text x="290.2" y="545.98" font-size="10.2" fill="#0a0a14" font-family="Liberation Sans" textLength="86.94" lengthAdjust="spacingAndGlyphs" stroke="#0a0a14" stroke-width="0.12" >Single Net Optimizer</text>
<text x="290.2" y="563.35" font-size="10.2" fill="#0a0a14" font-family="Liberation Sans" textLength="71.91" lengthAdjust="spacingAndGlyphs" stroke="#0a0a14" stroke-width="0.12" >Route Single Part</text>
<text x="290.2" y="580.72" font-size="10.2" fill="#8b8b8b" font-family="Liberation Sans" textLength="67.28" lengthAdjust="spacingAndGlyphs" stroke="#8b8b8b" stroke-width="0.12" >Place and Route</text>
</svg>
</body></html>
